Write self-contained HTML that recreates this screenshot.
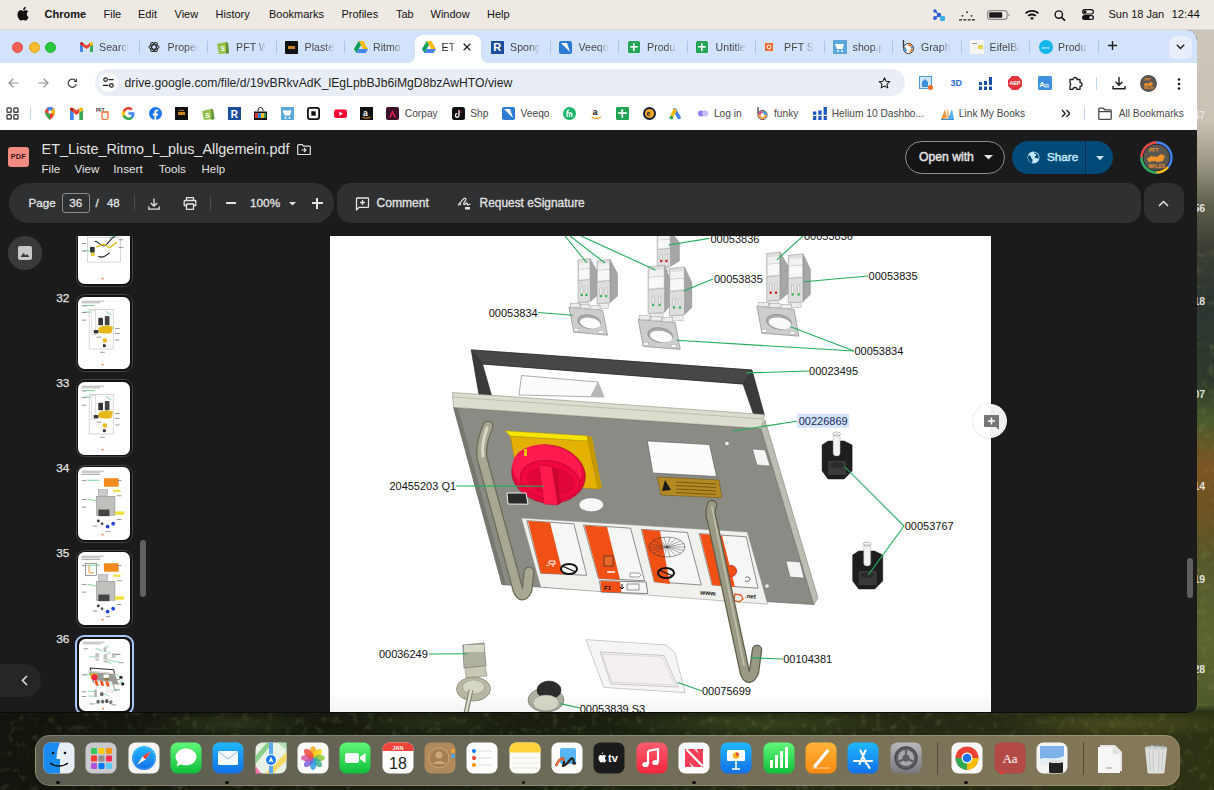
<!DOCTYPE html>
<html><head><meta charset="utf-8">
<style>
*{margin:0;padding:0;box-sizing:border-box}
html,body{width:1214px;height:790px;overflow:hidden;font-family:"Liberation Sans",sans-serif;position:relative;background:#2a3018}
.a{position:absolute}
#desk{left:0;top:0;width:1214px;height:790px;overflow:hidden}
#menubar{left:0;top:0;width:1214px;height:29.5px;background:#eeeae3;color:#111;font-size:11px}
#menubar span{position:absolute;top:9px;line-height:11px;white-space:nowrap}
#win{left:0;top:30px;width:1196.5px;height:682px;background:#1b1b1b;border-radius:0 10px 10px 0;overflow:hidden;box-shadow:0 1px 0 #0a0a0a}
#tabs{left:0;top:0;width:1197px;height:33px;background:#d3e3fd}
.ti{top:10px;height:14px;display:flex;align-items:center}
.tt{top:10px;font-size:10.6px;line-height:14px;color:#474747;white-space:nowrap;width:30px;overflow:hidden;-webkit-mask-image:linear-gradient(90deg,#000 65%,transparent 100%)}
.tsep{top:11px;width:1px;height:12px;background:#a8c4f0}
#toolbar{left:0;top:33px;width:1197px;height:67px;background:#fff}
.bt{top:45px;font-size:10.2px;line-height:12px;color:#474747;white-space:nowrap}
#drive{left:0;top:100px;width:1197px;height:583px;background:#1b1b1b}
.pill{background:#2f3031;border-radius:20px}
#page{left:330px;top:106px;width:661px;height:477px;background:#fff;overflow:hidden}
#dock{left:35px;top:734.5px;width:1145px;height:51px;background:linear-gradient(90deg,#5c5d50,#6a6857 40%,#7a7358 75%,#867857);border-radius:15px;border:1px solid rgba(210,210,190,.3)}
</style></head><body>
<div id="desk" class="a"><div class="a" style="left:0;top:0;width:1214px;height:790px;background:linear-gradient(180deg,#cdc8bb 0px,#c8c3b5 120px,#9a9682 165px,#5e5e4c 205px,#3c4034 245px,#2c3530 300px,#2e3a2c 380px,#4a5a2c 420px,#7c5624 465px,#6e5222 510px,#56582a 560px,#5a6430 640px,#4e5a2a 705px,#1c2212 714px,#1a1f10 790px)"></div>
<div class="a" style="left:0;top:712px;width:1214px;height:78px;background:linear-gradient(90deg,#11150d 0px,#161b0f 300px,#1a2010 600px,#212812 800px,#272b14 1000px,#2e3314 1214px)"></div>
<div class="a" style="left:0;top:712px;width:1214px;height:78px;background:radial-gradient(ellipse 90px 14px at 230px 12px,rgba(70,85,40,.45),transparent),radial-gradient(ellipse 150px 14px at 760px 12px,rgba(80,100,40,.45),transparent),radial-gradient(ellipse 120px 14px at 1120px 12px,rgba(110,110,40,.45),transparent),radial-gradient(ellipse 90px 14px at 430px 10px,rgba(60,75,35,.35),transparent)"></div>
<div class="a" style="left:1193.5px;top:109px;font:bold 10.5px/12px 'Liberation Sans';color:rgba(255,255,255,.55)">47</div>
<div class="a" style="left:1193.5px;top:202px;font:bold 10.5px/12px 'Liberation Sans';color:rgba(255,255,255,.85)">56</div>
<div class="a" style="left:1193.5px;top:295px;font:bold 10.5px/12px 'Liberation Sans';color:rgba(255,255,255,.85)">18</div>
<div class="a" style="left:1193.5px;top:388px;font:bold 10.5px/12px 'Liberation Sans';color:rgba(255,255,255,.85)">07</div>
<div class="a" style="left:1193.5px;top:480px;font:bold 10.5px/12px 'Liberation Sans';color:rgba(255,255,255,.85)">14</div>
<div class="a" style="left:1193.5px;top:573px;font:bold 10.5px/12px 'Liberation Sans';color:rgba(255,255,255,.85)">19</div>
<div class="a" style="left:1193.5px;top:663px;font:bold 10.5px/12px 'Liberation Sans';color:rgba(255,255,255,.85)">28</div>
<svg class="a" style="left:0;top:0" width="1214" height="790"><defs><filter id="fol" x="0" y="0" width="100%" height="100%"><feTurbulence type="fractalNoise" baseFrequency=".12" numOctaves="2" seed="7"/><feColorMatrix values="0 0 0 0 .3  0 0 0 0 .36  0 0 0 0 .12  0 0 0 1.8 -1"/></filter></defs><rect x="0" y="712" width="1214" height="78" filter="url(#fol)" opacity=".35"/><rect x="1196" y="250" width="18" height="462" filter="url(#fol)" opacity=".4"/></svg>
</div>
<div id="menubar" class="a">
  <svg class="a" style="left:17px;top:7px" width="12" height="14" viewBox="0 0 170 200"><path fill="#111" d="M150 170c-8 12-17 24-30 24s-17-8-32-8-20 8-32 8-22-13-30-25C9 144-3 100 15 70c8-15 24-24 40-24 13 0 25 9 33 9s21-10 36-9c6 0 24 2 36 19-1 1-21 13-21 38 0 30 26 40 26 40s-5 16-15 27zM117 27c7-8 11-19 10-30-10 0-22 7-29 15-6 7-12 18-10 29 11 1 22-6 29-14z"/></svg>
  <span style="left:44.5px;font-weight:bold">Chrome</span>
  <span style="left:103.5px">File</span>
  <span style="left:138px">Edit</span>
  <span style="left:174.5px">View</span>
  <span style="left:215.5px">History</span>
  <span style="left:269px">Bookmarks</span>
  <span style="left:341.5px">Profiles</span>
  <span style="left:396px">Tab</span>
  <span style="left:430.5px">Window</span>
  <span style="left:487px">Help</span>
  <!-- right icons -->
  <svg class="a" style="left:932px;top:9px" width="13" height="12" viewBox="0 0 13 12"><circle cx="3" cy="2" r="1.8" fill="#2f5fd0"/><circle cx="3" cy="9" r="2" fill="#2f5fd0"/><circle cx="7" cy="6" r="2.2" fill="#2f5fd0"/><path d="M3 2L7 6L3 9" stroke="#2f5fd0" stroke-width="1.2" fill="none"/><rect x="8" y="7" width="5" height="5" rx="1" fill="#3ab0e0"/></svg>
  <svg class="a" style="left:958.5px;top:10.5px" width="16" height="10" viewBox="0 0 16 10"><g fill="#222"><circle cx="8" cy="1.2" r=".9"/><circle cx="3.5" cy="4.8" r=".9"/><circle cx="12.5" cy="4.8" r=".9"/><rect x="0" y="8.2" width="3" height="1.3"/><rect x="4.3" y="8.2" width="3" height="1.3"/><rect x="8.7" y="8.2" width="3" height="1.3"/><rect x="13" y="8.2" width="3" height="1.3"/></g></svg>
  <svg class="a" style="left:987px;top:10px" width="23" height="10" viewBox="0 0 23 10"><rect x=".6" y=".6" width="19.5" height="8.8" rx="2.6" fill="none" stroke="#888" stroke-width="1.1"/><rect x="2.2" y="2.2" width="13" height="5.6" rx="1.2" fill="#1a1a1a"/><path d="M21.3 3.4v3.2c.8-.3 1.2-.9 1.2-1.6s-.4-1.3-1.2-1.6z" fill="#888"/></svg>
  <svg class="a" style="left:1025px;top:10px" width="14" height="10" viewBox="0 0 14 10"><path fill="#111" d="M7 0C4.3 0 1.9 1 0 2.7l1.2 1.3C2.8 2.6 4.8 1.8 7 1.8s4.2.8 5.8 2.2L14 2.7C12.1 1 9.7 0 7 0zM7 3.6c-1.7 0-3.2.6-4.4 1.7l1.2 1.3C4.7 5.8 5.8 5.4 7 5.4s2.3.4 3.2 1.2l1.2-1.3C10.2 4.2 8.7 3.6 7 3.6zM7 7.2c-.8 0-1.5.3-2 .8L7 10l2-2c-.5-.5-1.2-.8-2-.8z"/></svg>
  <svg class="a" style="left:1054px;top:9.5px" width="12" height="11" viewBox="0 0 12 11"><circle cx="4.8" cy="4.6" r="3.7" fill="none" stroke="#111" stroke-width="1.4"/><path d="M7.5 7.4l3.6 3.3" stroke="#111" stroke-width="1.6"/></svg>
  <svg class="a" style="left:1082px;top:9px" width="12" height="11" viewBox="0 0 12 11"><rect x=".6" y=".6" width="10.8" height="4.4" rx="2.2" fill="none" stroke="#111" stroke-width="1.1"/><circle cx="3" cy="2.8" r="1.6" fill="#111"/><rect x="0" y="6" width="12" height="5" rx="2.5" fill="#111"/><circle cx="9" cy="8.5" r="1.6" fill="#eee"/></svg>
  <span style="left:1108.5px;font-size:11px">Sun 18 Jan</span>
  <span style="left:1171.4px;font-size:11.4px">12:44</span>
</div>
<div class="a" style="left:0;top:29px;width:1214px;height:1px;background:#d9d5cd"></div><div id="win" class="a">
<div id="tabs" class="a"><div class="a ti" style="left:79.8px"><svg width="13" height="10" viewBox="0 0 26 20"><path d="M2 20h4V9L0 4.5V18a2 2 0 0 0 2 2z" fill="#4285f4"/><path d="M20 20h4a2 2 0 0 0 2-2V4.5L20 9z" fill="#34a853"/><path d="M20 2v7l6-4.5V3c0-2.5-2.8-3.9-4.8-2.4z" fill="#fbbc04"/><path d="M6 9V2l7 5.2L20 2v7l-7 5.2z" fill="#ea4335"/><path d="M0 3v1.5L6 9V2L4.8.6C2.8-.9 0 .5 0 3z" fill="#c5221f"/></svg></div>
<div class="a tt" style="left:99.1px">Search</div>
<div class="a tsep" style="left:138.7px"></div>
<div class="a ti" style="left:148.3px"><svg width="12" height="12" viewBox="0 0 24 24"><g fill="none" stroke="#222" stroke-width="2"><ellipse cx="12" cy="12" rx="10" ry="4.5"/><ellipse cx="12" cy="12" rx="10" ry="4.5" transform="rotate(60 12 12)"/><ellipse cx="12" cy="12" rx="10" ry="4.5" transform="rotate(120 12 12)"/></g></svg></div>
<div class="a tt" style="left:167.6px">Proper</div>
<div class="a tsep" style="left:207.2px"></div>
<div class="a ti" style="left:216.8px"><svg width="12" height="14" viewBox="0 0 24 28"><path d="M3 7l15-3 4 2 2 20-20 2L0 8z" fill="#95bf47"/><path d="M18 4l4 2 2 20-6 2z" fill="#5e8e3e"/><text x="7" y="21" font-size="13" font-weight="bold" fill="#fff" font-family="Liberation Sans">S</text></svg></div>
<div class="a tt" style="left:236.1px">PFT W</div>
<div class="a tsep" style="left:275.7px"></div>
<div class="a ti" style="left:285.3px"><div style="width:13px;height:13px;background:#111;border-radius:1px;position:relative"><div style="position:absolute;left:3px;top:5px;width:7px;height:3px;background:#c8861e"></div></div></div>
<div class="a tt" style="left:304.6px">Plaste</div>
<div class="a tsep" style="left:344.2px"></div>
<div class="a ti" style="left:353.8px"><svg width="14" height="12" viewBox="0 0 28 24"><path d="M9.3 0h9.4l9.3 16h-9.4z" fill="#ffba00"/><path d="M9.3 0L0 16l4.7 8L14 8z" fill="#0f9d58"/><path d="M4.7 24h18.6l4.7-8H9.3z" fill="#4285f4"/></svg></div>
<div class="a tt" style="left:373.1px">Ritmo</div>
<div class="a" style="left:414.5px;top:5px;width:66px;height:28px;background:#fff;border-radius:8px 8px 0 0"></div>
<div class="a" style="left:406.5px;top:25px;width:8px;height:8px;background:radial-gradient(circle at 0 0,#d3e3fd 8px,#fff 8.5px)"></div>
<div class="a" style="left:480.5px;top:25px;width:8px;height:8px;background:radial-gradient(circle at 100% 0,#d3e3fd 8px,#fff 8.5px)"></div>
<div class="a ti" style="left:422.3px"><svg width="14" height="12" viewBox="0 0 28 24"><path d="M9.3 0h9.4l9.3 16h-9.4z" fill="#ffba00"/><path d="M9.3 0L0 16l4.7 8L14 8z" fill="#0f9d58"/><path d="M4.7 24h18.6l4.7-8H9.3z" fill="#4285f4"/></svg></div>
<div class="a tt" style="left:441.6px;width:14px;color:#1f1f1f">ET</div>
<svg class="a" style="left:462.5px;top:13px" width="8" height="8" viewBox="0 0 8 8"><path d="M.7.7l6.6 6.6M7.3.7L.7 7.3" stroke="#1f1f1f" stroke-width="1.3"/></svg>
<div class="a ti" style="left:490.8px"><div style="width:13px;height:13px;background:#1d4e9e;color:#fff;font:bold 11px/13px Liberation Sans;text-align:center">R</div></div>
<div class="a tt" style="left:510.1px">Spong</div>
<div class="a tsep" style="left:549.7px"></div>
<div class="a ti" style="left:559.3px"><svg width="13" height="13" viewBox="0 0 13 13"><rect width="13" height="13" rx="2" fill="#2b7bd4"/><path d="M2 2h6l3 9z" fill="#fff"/></svg></div>
<div class="a tt" style="left:578.6px">Veeqo</div>
<div class="a tsep" style="left:618.2px"></div>
<div class="a ti" style="left:627.8px"><svg width="12" height="12" viewBox="0 0 12 12"><rect width="12" height="12" rx="1.5" fill="#23a455"/><rect x="2.2" y="5" width="7.6" height="1.6" fill="#fff"/><rect x="5" y="2.2" width="1.6" height="8" fill="#fff"/></svg></div>
<div class="a tt" style="left:647.1px">Produ</div>
<div class="a tsep" style="left:686.7px"></div>
<div class="a ti" style="left:696.3px"><svg width="12" height="12" viewBox="0 0 12 12"><rect width="12" height="12" rx="1.5" fill="#23a455"/><rect x="2.2" y="5" width="7.6" height="1.6" fill="#fff"/><rect x="5" y="2.2" width="1.6" height="8" fill="#fff"/></svg></div>
<div class="a tt" style="left:715.6px">Untitle</div>
<div class="a tsep" style="left:755.2px"></div>
<div class="a ti" style="left:764.8px"><svg width="8" height="8" viewBox="0 0 8 8"><rect width="8" height="8" fill="#f26a2b"/><circle cx="4" cy="4" r="2" fill="none" stroke="#fff" stroke-width="1"/></svg></div>
<div class="a tt" style="left:784.1px">PFT St</div>
<div class="a tsep" style="left:823.7px"></div>
<div class="a ti" style="left:833.3px"><svg width="14" height="14" viewBox="0 0 14 14"><rect width="14" height="14" fill="#5aa7dc"/><path d="M2 4h9l-1.5 5H4z" fill="#fff"/><circle cx="5" cy="11" r="1" fill="#fff"/><circle cx="9" cy="11" r="1" fill="#fff"/></svg></div>
<div class="a tt" style="left:852.6px">shop.p</div>
<div class="a tsep" style="left:892.2px"></div>
<div class="a ti" style="left:901.8px"><svg width="12" height="14" viewBox="0 0 12 14"><path d="M1.5 0v8" stroke="#333" stroke-width="1.3"/><circle cx="6.5" cy="8.5" r="5" fill="#fff" stroke="#333" stroke-width="1"/><circle cx="6.5" cy="8.5" r="3.6" fill="none" stroke="#e84" stroke-width="2.2" stroke-dasharray="4 4"/><circle cx="6.5" cy="8.5" r="3.6" fill="none" stroke="#49c" stroke-width="2.2" stroke-dasharray="4 8" stroke-dashoffset="4"/></svg></div>
<div class="a tt" style="left:921.1px">Graphi</div>
<div class="a tsep" style="left:960.7px"></div>
<div class="a ti" style="left:970.3px"><div style="width:14px;height:14px;background:#f4f4f0;position:relative"><div style="position:absolute;left:8px;top:5px;width:5px;height:4px;background:#e7d64a"></div><div style="position:absolute;left:2px;top:3px;width:5px;height:1px;background:#999"></div></div></div>
<div class="a tt" style="left:989.6px">EifelBa</div>
<div class="a tsep" style="left:1029.2px"></div>
<div class="a ti" style="left:1038.8px"><svg width="14" height="14" viewBox="0 0 14 14"><circle cx="7" cy="7" r="7" fill="#13b5ea"/><text x="2.5" y="8.6" font-size="4" fill="#fff" font-family="Liberation Sans">xero</text></svg></div>
<div class="a tt" style="left:1058.1px">Produ</div>
<div class="a tsep" style="left:1097.7px"></div><div class="a" style="left:12px;top:12px;width:11px;height:11px;border-radius:50%;background:#ff5f57;border:.5px solid #e2463f"></div><div class="a" style="left:28.5px;top:12px;width:11px;height:11px;border-radius:50%;background:#febc2e;border:.5px solid #e1a116"></div><div class="a" style="left:45px;top:12px;width:11px;height:11px;border-radius:50%;background:#28c840;border:.5px solid #1aab29"></div><div class="a" style="left:1108px;top:11px;font-size:0"><svg width="9" height="9" viewBox="0 0 9 9"><path d="M4.5 0v9M0 4.5h9" stroke="#1f1f1f" stroke-width="1.4"/></svg></div><div class="a" style="left:1168.5px;top:5.5px;width:23px;height:23px;border-radius:7px;background:#e8effb"></div><svg class="a" style="left:1175.5px;top:14px" width="9" height="6" viewBox="0 0 9 6"><path d="M.8.8L4.5 4.5 8.2.8" fill="none" stroke="#1f1f1f" stroke-width="1.4"/></svg></div>
<div id="toolbar" class="a">
  <svg class="a" style="left:8px;top:15px" width="11" height="10" viewBox="0 0 11 10"><path d="M10.5 5H1.2M5.3 .8L1 5l4.3 4.2" fill="none" stroke="#8e9297" stroke-width="1.2"/></svg>
  <svg class="a" style="left:37.5px;top:15px" width="11" height="10" viewBox="0 0 11 10"><path d="M.5 5h9.3M5.7 .8L10 5 5.7 9.2" fill="none" stroke="#8e9297" stroke-width="1.2"/></svg>
  <svg class="a" style="left:67px;top:14.5px" width="11" height="11" viewBox="0 0 11 11"><path d="M9.3 6.2A4.1 4.1 0 1 1 8.2 2.3" fill="none" stroke="#474747" stroke-width="1.3"/><path d="M10 .3v3.6H6.4z" fill="#474747"/></svg>
  <div class="a" style="left:94.5px;top:6px;width:810px;height:27px;border-radius:14px;background:#e9eef6"></div>
  <div class="a" style="left:99px;top:10px;width:19px;height:19px;border-radius:50%;background:#fff"></div>
  <svg class="a" style="left:103px;top:14px" width="11" height="11" viewBox="0 0 11 11"><g fill="none" stroke="#1f1f1f" stroke-width="1.2"><circle cx="2.6" cy="2.6" r="1.8"/><path d="M5.5 2.6h5"/><circle cx="8.4" cy="8.4" r="1.8"/><path d="M0 8.4h5.5"/></g></svg>
  <div class="a" style="left:124.6px;top:12.5px;font-size:12.2px;line-height:14px;color:#1f1f1f;white-space:nowrap">drive.google.com/file/d/19vBRkvAdK_lEgLpbBJb6iMgD8bzAwHTO/view</div>
  <svg class="a" style="left:878px;top:14px" width="13" height="12" viewBox="0 0 24 23"><path d="M12 1.5l3 6.6 7.2.8-5.4 4.9 1.5 7.1L12 17.3l-6.3 3.6 1.5-7.1L1.8 8.9 9 8.1z" fill="none" stroke="#1f1f1f" stroke-width="2" stroke-linejoin="round"/></svg>
  <!-- extensions -->
  <svg class="a" style="left:919px;top:13px" width="14" height="14" viewBox="0 0 14 14"><rect x=".5" y=".5" width="12" height="12" fill="#cfe6fb" stroke="#4a9be0"/><path d="M3 11V6l3-3 3 3v5" fill="#3c8fd8"/><circle cx="11.5" cy="11.5" r="2.5" fill="#f36d21"/></svg>
  <div class="a" style="left:950.5px;top:14px;font:bold 9px/12px 'Liberation Sans';color:#2a6ad8">3D</div>
  <svg class="a" style="left:978.5px;top:14px" width="14" height="13" viewBox="0 0 14 13"><g fill="#1a4fa8"><rect x="0" y="5" width="3" height="3"/><rect x="0" y="9.5" width="3" height="3.5"/><rect x="5" y="4" width="3" height="4"/><rect x="5" y="9.5" width="3" height="3.5"/><rect x="10" y="0" width="3" height="8"/><rect x="10" y="9.5" width="3" height="3.5"/></g></svg>
  <svg class="a" style="left:1008px;top:13px" width="14" height="14" viewBox="0 0 14 14"><path d="M4.1 0h5.8L14 4.1v5.8L9.9 14H4.1L0 9.9V4.1z" fill="#e3343c"/><text x="1.5" y="9" font-size="5.2" font-weight="bold" fill="#fff" font-family="Liberation Sans">ABP</text></svg>
  <svg class="a" style="left:1038px;top:13px" width="14" height="14" viewBox="0 0 14 14"><rect width="14" height="14" rx="1.5" fill="#3d8fe0"/><text x="1.3" y="10.5" font-size="8" font-weight="bold" fill="#fff" font-family="Liberation Sans">A</text><text x="7" y="12" font-size="5.5" font-weight="bold" fill="#e8f2ff" font-family="Liberation Sans">R</text></svg>
  <svg class="a" style="left:1068px;top:13px" width="15" height="14" viewBox="0 0 15 14"><path d="M2 3.5h3a2 2 0 0 1 4 0h3v3a2 2 0 0 1 0 4v3h-3a2 2 0 0 0-4 0H2v-3.5a2 2 0 0 0 0-3z" fill="none" stroke="#1f1f1f" stroke-width="1.3" stroke-linejoin="round"/></svg>
  <div class="a" style="left:1096px;top:14px;width:1px;height:13px;background:#c2d6f2"></div>
  <svg class="a" style="left:1112px;top:13px" width="14" height="14" viewBox="0 0 14 14"><path d="M7 1v8M3.5 5.8L7 9.3l3.5-3.5M1 10v2.8h12V10" fill="none" stroke="#1f1f1f" stroke-width="1.4"/></svg>
  <svg class="a" style="left:1140px;top:11.5px" width="17" height="17" viewBox="0 0 17 17"><circle cx="8.5" cy="8.5" r="8.5" fill="#5a5650"/><text x="4.5" y="6" font-size="3.2" font-weight="bold" fill="#f0932b" font-family="Liberation Sans">PFT</text><path d="M3.5 9.5l2-1.5 3 .5 2.2-1.5 2.3 1-1 2.5-2.5.5-2-.5-2.5.5z" fill="#f0932b"/><text x="3.8" y="14" font-size="2.8" font-weight="bold" fill="#f0932b" font-family="Liberation Sans">WALES</text></svg>
  <svg class="a" style="left:1176.5px;top:14.5px" width="4" height="12" viewBox="0 0 4 12"><g fill="#1f1f1f"><circle cx="2" cy="1.5" r="1.3"/><circle cx="2" cy="6" r="1.3"/><circle cx="2" cy="10.5" r="1.3"/></g></svg>
<svg class="a" style="left:5.5px;top:44px" width="13" height="13" viewBox="0 0 13 13"><g fill="none" stroke="#474747" stroke-width="1.4"><rect x="1" y="1" width="4.2" height="4.2" rx=".8"/><rect x="7.8" y="1" width="4.2" height="4.2" rx=".8"/><rect x="1" y="7.8" width="4.2" height="4.2" rx=".8"/><rect x="7.8" y="7.8" width="4.2" height="4.2" rx=".8"/></g></svg>
<div class="a" style="left:30px;top:44px;width:1px;height:12.5px;background:#c2d6f2"></div>
<svg class="a" style="left:44.5px;top:44px" width="10" height="13" viewBox="0 0 10 13"><path d="M5 0C2.2 0 0 2.2 0 5c0 3.5 5 8 5 8s5-4.5 5-8c0-2.8-2.2-5-5-5z" fill="#ea4335"/><path d="M0 5c0 3.5 5 8 5 8V7.5z" fill="#34a853"/><path d="M1.5 1.5L5 5 8.5 1.5A5 5 0 0 0 1.5 1.5z" fill="#4285f4"/><path d="M10 5c0 1-.3 2-1 3L5 5l3.5-3.5c1 .9 1.5 2.2 1.5 3.5z" fill="#fbbc04"/><circle cx="5" cy="5" r="1.7" fill="#fff"/></svg>
<svg class="a" style="left:70px;top:44px" width="13" height="13" viewBox="0 0 13 13"><path d="M1 13h2.7V5.8L0 3v9a1 1 0 0 0 1 1z" fill="#4285f4"/><path d="M9.3 13H12a1 1 0 0 0 1-1V3L9.3 5.8z" fill="#34a853"/><path d="M3.7 5.8V1.3L6.5 3.4l2.8-2.1v4.5L6.5 7.9z" fill="#ea4335"/><path d="M9.3 1.3v4.5L13 3V2c0-1.2-1.4-1.9-2.4-1.2z" fill="#fbbc04"/><path d="M0 2v1l3.7 2.8V1.3L2.4.8C1.4.1 0 .8 0 2z" fill="#c5221f"/></svg>
<svg class="a" style="left:96px;top:44px" width="13" height="13" viewBox="0 0 13 13"><text x="0" y="5" font-size="4.5" font-weight="bold" fill="#222" font-family="Liberation Sans">PFT</text><path d="M6 5h6v5c0 2-2 3-3 3s-3-1-3-3z" fill="none" stroke="#f26a2b" stroke-width="1.3"/></svg>
<svg class="a" style="left:122px;top:44px" width="13" height="13" viewBox="0 0 13 13"><path d="M12.5 6.6c0-.5 0-.9-.1-1.3H6.5v2.5h3.4c-.2.8-.6 1.5-1.3 1.9v1.6h2.1c1.2-1.1 1.8-2.7 1.8-4.7z" fill="#4285f4"/><path d="M6.5 13c1.7 0 3.2-.6 4.2-1.6L8.6 9.8c-.6.4-1.3.6-2.1.6-1.6 0-3-1.1-3.5-2.6H.8v1.7C1.9 11.5 4 13 6.5 13z" fill="#34a853"/><path d="M3 7.8c-.1-.4-.2-.9-.2-1.3s.1-.9.2-1.3V3.5H.8C.3 4.4 0 5.4 0 6.5s.3 2.1.8 3z" fill="#fbbc04"/><path d="M6.5 2.6c.9 0 1.7.3 2.4.9l1.8-1.8C9.7.7 8.2 0 6.5 0 4 0 1.9 1.5.8 3.5L3 5.2c.5-1.5 1.9-2.6 3.5-2.6z" fill="#ea4335"/></svg>
<svg class="a" style="left:148.7px;top:44px" width="13" height="13" viewBox="0 0 13 13"><circle cx="6.5" cy="6.5" r="6.5" fill="#1877f2"/><path d="M7.3 13V8.4h1.6l.3-1.9H7.3V5.3c0-.5.3-1 1.1-1h.9V2.7S8.5 2.5 7.8 2.5C6.3 2.5 5.4 3.4 5.4 5v1.5H3.8v1.9h1.6V13z" fill="#fff"/></svg>
<svg class="a" style="left:175px;top:44px" width="13" height="13" viewBox="0 0 13 13"><rect width="13" height="13" fill="#111"/><rect x="3" y="5" width="7" height="3" fill="#c8861e"/><rect x="4" y="3" width="5" height="1" fill="#a06a1a"/></svg>
<svg class="a" style="left:201.5px;top:44px" width="13" height="13" viewBox="0 0 13 13"><path d="M2 3.5l7.5-1.8L11 2.5l1.5 9.5L2 13 0 4.2z" fill="#95bf47"/><path d="M9.5 1.7L11 2.5l1.5 9.5-3 1z" fill="#5e8e3e"/><text x="3.2" y="10.5" font-size="7" font-weight="bold" fill="#fff" font-family="Liberation Sans">S</text></svg>
<svg class="a" style="left:228px;top:44px" width="13" height="13" viewBox="0 0 13 13"><rect width="13" height="13" fill="#1d4e9e"/><text x="2.8" y="10.8" font-size="10" font-weight="bold" fill="#fff" font-family="Liberation Sans">R</text></svg>
<svg class="a" style="left:254px;top:44px" width="13" height="13" viewBox="0 0 13 13"><path d="M4 4V3a2.5 2.5 0 0 1 5 0v1" fill="none" stroke="#222" stroke-width="1"/><rect x="0" y="4.5" width="13" height="8.5" fill="#111"/><rect x="1" y="6" width="3" height="5" fill="#e53935"/><rect x="4" y="6" width="3" height="5" fill="#1e88e5"/><rect x="7" y="6" width="3" height="5" fill="#fbc02d"/><rect x="10" y="6" width="2" height="5" fill="#43a047"/></svg>
<svg class="a" style="left:281px;top:44px" width="13" height="13" viewBox="0 0 13 13"><rect width="13" height="13" fill="#5aa7dc"/><path d="M1.5 3.5h9L9 8.5H3.5z" fill="#fff"/><circle cx="4.5" cy="10.8" r="1" fill="#fff"/><circle cx="8.5" cy="10.8" r="1" fill="#fff"/></svg>
<svg class="a" style="left:307.3px;top:44px" width="13" height="13" viewBox="0 0 13 13"><rect x=".9" y=".9" width="11.2" height="11.2" rx="2" fill="none" stroke="#111" stroke-width="1.8"/><rect x="4.3" y="4.3" width="4.4" height="4.4" fill="#111"/></svg>
<svg class="a" style="left:333.7px;top:44px" width="13" height="13" viewBox="0 0 13 13"><rect x="0" y="2.5" width="13" height="8.5" rx="2.3" fill="#ff0033"/><path d="M5.3 4.6v4.3l3.6-2.15z" fill="#fff"/></svg>
<svg class="a" style="left:360px;top:44px" width="13" height="13" viewBox="0 0 13 13"><rect width="13" height="13" fill="#111"/><text x="3" y="8.5" font-size="8.5" font-weight="bold" fill="#fff" font-family="Liberation Sans">a</text><path d="M2.5 10c2.5 1.5 6 1.5 8 0" fill="none" stroke="#f90" stroke-width="1"/></svg>
<svg class="a" style="left:386.4px;top:44px" width="13" height="13" viewBox="0 0 13 13"><rect width="13" height="13" rx="2" fill="#3b1028"/><path d="M3 10.5L6.5 3l3.5 7.5H8.3L6.5 6.5 4.7 10.5z" fill="#e3224b"/></svg>
<div class="a bt" style="left:404.8px">Corpay</div>
<svg class="a" style="left:451.8px;top:44px" width="13" height="13" viewBox="0 0 13 13"><rect width="13" height="13" rx="2.5" fill="#111"/><path d="M7 3v5.5a1.8 1.8 0 1 1-1.8-1.8" fill="none" stroke="#fff" stroke-width="1.3"/><path d="M7 3.2c.3 1.2 1.2 2 2.5 2" fill="none" stroke="#ff2d55" stroke-width="1"/></svg>
<div class="a bt" style="left:470.2px">Shp</div>
<svg class="a" style="left:501.8px;top:44px" width="13" height="13" viewBox="0 0 13 13"><rect width="13" height="13" rx="2" fill="#2b7bd4"/><path d="M2 2h6l3 9z" fill="#fff"/></svg>
<div class="a bt" style="left:520.6px">Veeqo</div>
<svg class="a" style="left:563px;top:44px" width="13" height="13" viewBox="0 0 13 13"><circle cx="6.5" cy="6.5" r="6.5" fill="#1bb56b"/><path d="M4.2 10V5.2c0-1.2.8-2 2-2M3.3 5.5h2.8M6.5 10V7a1.2 1.2 0 0 1 2.4 0v3" fill="none" stroke="#fff" stroke-width="1.3"/></svg>
<svg class="a" style="left:589.5px;top:44px" width="13" height="13" viewBox="0 0 13 13"><text x="2.5" y="8" font-size="9" font-weight="bold" fill="#111" font-family="Liberation Sans">a</text><path d="M1.5 10c2.8 1.7 6.5 1.7 9.5 0" fill="none" stroke="#f90" stroke-width="1.2"/></svg>
<svg class="a" style="left:616px;top:44px" width="13" height="13" viewBox="0 0 13 13"><rect width="13" height="13" rx="1.2" fill="#23a455"/><rect x="2.2" y="5.2" width="8.6" height="1.7" fill="#fff"/><rect x="5.4" y="2.2" width="1.7" height="8.6" fill="#fff"/></svg>
<svg class="a" style="left:642.5px;top:44px" width="13" height="13" viewBox="0 0 13 13"><circle cx="6.5" cy="6.5" r="6.5" fill="#101a3a"/><circle cx="6.5" cy="6.5" r="4.6" fill="#f5a623"/><text x="3.6" y="9" font-size="7" font-weight="bold" fill="#101a3a" font-family="Liberation Sans">e</text></svg>
<svg class="a" style="left:668.9px;top:44px" width="13" height="13" viewBox="0 0 13 13"><path d="M4.8 1.3a1.8 1.8 0 0 1 2.4.6l4.5 7.8a1.8 1.8 0 0 1-3.1 1.8L4.1 3.7a1.8 1.8 0 0 1 .7-2.4z" fill="#4285f4"/><path d="M4.9 1.6L1.3 8.2l3 1.8L8 3.5z" fill="#fbbc04"/><circle cx="2.4" cy="10.6" r="1.9" fill="#34a853"/></svg>
<svg class="a" style="left:696.5px;top:44px" width="12" height="13" viewBox="0 0 12 13"><circle cx="4" cy="6.5" r="3" fill="#8c7cf0"/><circle cx="8.3" cy="6.5" r="3" fill="#c9c0fb"/></svg>
<div class="a bt" style="left:713.9px">Log in</div>
<svg class="a" style="left:755.5px;top:44px" width="12" height="13" viewBox="0 0 12 13"><path d="M2 0v7" stroke="#333" stroke-width="1.2"/><circle cx="6.5" cy="8" r="4.6" fill="#fff" stroke="#333" stroke-width=".9"/><circle cx="6.5" cy="8" r="3" fill="none" stroke="#f2a03d" stroke-width="2"/><path d="M6.5 5a3 3 0 0 1 3 3" fill="none" stroke="#3aa7e0" stroke-width="2"/><path d="M3.5 8a3 3 0 0 1 3-3" fill="none" stroke="#e24d9b" stroke-width="2"/></svg>
<div class="a bt" style="left:774px">funky</div>
<svg class="a" style="left:812.8px;top:44px" width="14" height="13" viewBox="0 0 14 13"><g fill="#1a55c4"><rect x="0" y="4.5" width="3.3" height="3.3"/><rect x="0" y="9" width="3.3" height="4"/><rect x="5.3" y="3.5" width="3.3" height="4.3"/><rect x="5.3" y="9" width="3.3" height="4"/><rect x="10.6" y="0" width="3.3" height="7.8"/><rect x="10.6" y="9" width="3.3" height="4"/></g></svg>
<div class="a bt" style="left:831.7px">Helium 10 Dashbo...</div>
<svg class="a" style="left:940.8px;top:44px" width="13" height="13" viewBox="0 0 13 13"><path d="M0 12L4 2l2 10z" fill="#f2994a"/><path d="M4 12l3-11 2 11z" fill="#f6c28b"/><path d="M7 12l4-10 2 10z" fill="#56b4e9"/><path d="M0 12.5h13" stroke="#3a8fd8" stroke-width="1"/></svg>
<div class="a bt" style="left:958.8px">Link My Books</div>
<svg class="a" style="left:1061px;top:44px" width="9" height="13" viewBox="0 0 9 13"><path d="M1 3l3.2 3.5L1 10M5.5 3l3.2 3.5L5.5 10" fill="none" stroke="#1f1f1f" stroke-width="1.3"/></svg>
<div class="a" style="left:1084px;top:44px;width:1px;height:12.5px;background:#c2d6f2"></div>
<svg class="a" style="left:1098.4px;top:44px" width="14" height="13" viewBox="0 0 14 13"><path d="M.8 2.2c0-.6.4-1 1-1h3.6l1.4 1.6h5.4c.6 0 1 .4 1 1v7.6c0 .6-.4 1-1 1H1.8c-.6 0-1-.4-1-1z" fill="none" stroke="#474747" stroke-width="1.3"/><path d="M.8 4.6h12" stroke="#474747" stroke-width="1.1"/></svg>
<div class="a bt" style="left:1118.7px">All Bookmarks</div>
</div>
<div id="drive" class="a"><div class="a" style="left:8px;top:17px;width:20.5px;height:20px;border-radius:3px;background:#f28b82;color:#3c1410;font:bold 7.2px/20px Liberation Sans;text-align:center;letter-spacing:.2px">PDF</div>
<div class="a" style="left:41.6px;top:11px;font-size:14.4px;line-height:16px;color:#e3e3e3;white-space:nowrap">ET_Liste_Ritmo_L_plus_Allgemein.pdf</div>
<svg class="a" style="left:297px;top:14px" width="14" height="11" viewBox="0 0 14 11"><path d="M.7 1.5c0-.5.3-.8.8-.8h3.8l1.2 1.4h6c.5 0 .8.3.8.8v7c0 .5-.3.8-.8.8H1.5c-.5 0-.8-.3-.8-.8z" fill="none" stroke="#e3e3e3" stroke-width="1.2"/><path d="M4.5 6h4.5M7 4l2 2-2 2" fill="none" stroke="#e3e3e3" stroke-width="1.1"/></svg>
<div class="a" style="left:41.6px;top:32.5px;font-size:11.5px;line-height:12px;color:#e3e3e3;white-space:nowrap">File</div>
<div class="a" style="left:74.6px;top:32.5px;font-size:11.5px;line-height:12px;color:#e3e3e3;white-space:nowrap">View</div>
<div class="a" style="left:113.3px;top:32.5px;font-size:11.8px;line-height:12px;color:#e3e3e3;white-space:nowrap">Insert</div>
<div class="a" style="left:158.7px;top:32.5px;font-size:11.6px;line-height:12px;color:#e3e3e3;white-space:nowrap">Tools</div>
<div class="a" style="left:201.6px;top:32.5px;font-size:11.4px;line-height:12px;color:#e3e3e3;white-space:nowrap">Help</div>
<div class="a" style="left:904.5px;top:10.5px;width:100.5px;height:33px;border:1px solid #8f8f8f;border-radius:17px;background:#141414"></div>
<div class="a" style="left:919px;top:20px;font-size:12.2px;line-height:14px;color:#e3e3e3;-webkit-text-stroke:.45px #e3e3e3;white-space:nowrap">Open with</div>
<svg class="a" style="left:983.5px;top:25.19999999999999px" width="9" height="5" viewBox="0 0 9 5"><path d="M0 0h9L4.5 4.5z" fill="#e3e3e3"/></svg>
<div class="a" style="left:1011.8px;top:10.5px;width:101.5px;height:33px;border-radius:17px;background:#004a77"></div>
<div class="a" style="left:1085px;top:10.5px;width:1px;height:33px;background:#06304f"></div>
<svg class="a" style="left:1026.5px;top:21px" width="13" height="13" viewBox="0 0 24 24"><circle cx="12" cy="12" r="11" fill="#c2e7ff"/><path d="M3 8c2 0 3 1 4 2s0 3 2 4 1 3 1 5-1 3-1 3A10 10 0 0 1 3 8zM13 2.2c1 1 0 2 1 3s3 0 3 2-3 2-3 4 2 2 4 2 3 1 3 2A10 10 0 0 0 13 2.2z" fill="#004a77"/></svg>
<div class="a" style="left:1047px;top:20px;font-size:11.7px;line-height:14px;color:#c2e7ff;-webkit-text-stroke:.45px #c2e7ff;white-space:nowrap">Share</div>
<svg class="a" style="left:1095.5px;top:25.5px" width="8" height="5" viewBox="0 0 8 5"><path d="M0 0h8L4 4.2z" fill="#c2e7ff"/></svg>
<svg class="a" style="left:1140px;top:10.5px" width="33" height="33" viewBox="0 0 33 33"><circle cx="16.5" cy="16.5" r="15" fill="none" stroke="#4285f4" stroke-width="2.4"/><path d="M16.5 1.5A15 15 0 0 0 1.5 16.5" fill="none" stroke="#ea4335" stroke-width="2.4"/><path d="M1.5 16.5A15 15 0 0 0 16.5 31.5" fill="none" stroke="#34a853" stroke-width="2.4"/><path d="M16.5 31.5A15 15 0 0 0 28 26" fill="none" stroke="#fbbc04" stroke-width="2.4"/><circle cx="16.5" cy="16.5" r="13" fill="#5a5650"/><text x="9" y="11" font-size="5" font-weight="bold" fill="#f0932b" font-family="Liberation Sans">PFT</text><path d="M7 18l4-3 6 1 4-3 4 2-2 5-5 1-4-1-5 1z" fill="#f0932b"/><text x="8.5" y="27" font-size="4.6" font-weight="bold" fill="#f0932b" font-family="Liberation Sans">WALES</text></svg>
<div class="a" style="left:8.5px;top:53.3px;width:325px;height:40px;border-radius:20px;background:#2f3031"></div>
<div class="a" style="left:337px;top:53.3px;width:803.5px;height:40px;border-radius:14px;background:#2f3031"></div>
<div class="a" style="left:1143.5px;top:53.3px;width:40px;height:40px;border-radius:13px;background:#2f3031"></div>
<svg class="a" style="left:1158px;top:69.5px" width="11" height="7" viewBox="0 0 11 7"><path d="M1 6l4.5-4.5L10 6" fill="none" stroke="#e3e3e3" stroke-width="1.5"/></svg>
<div class="a" style="left:28.5px;top:66px;color:#e3e3e3;white-space:nowrap;font-size:11.6px;line-height:14px;-webkit-text-stroke:.3px #e3e3e3">Page</div>
<div class="a" style="left:62px;top:63px;width:27.5px;height:20px;border:1px solid #8a8a8a;border-radius:3px"></div>
<div class="a" style="left:62px;top:66px;color:#e3e3e3;white-space:nowrap;font-size:11.6px;line-height:14px;-webkit-text-stroke:.3px #e3e3e3;width:27.5px;text-align:center">36</div>
<div class="a" style="left:95.5px;top:66px;color:#e3e3e3;white-space:nowrap;font-size:11.6px;line-height:14px;-webkit-text-stroke:.3px #e3e3e3">/</div>
<div class="a" style="left:107px;top:66px;color:#e3e3e3;white-space:nowrap;font-size:11.6px;line-height:14px;-webkit-text-stroke:.3px #e3e3e3;font-size:11.4px">48</div>
<div class="a" style="left:133.5px;top:65px;width:1px;height:16px;background:#4d4d4d"></div>
<svg class="a" style="left:148px;top:67.5px" width="12" height="12" viewBox="0 0 12 12"><path d="M6 .5v7.5M2.8 5L6 8.2 9.2 5M.8 8.5v2.7h10.4V8.5" fill="none" stroke="#e3e3e3" stroke-width="1.3"/></svg>
<svg class="a" style="left:183px;top:67px" width="14" height="13" viewBox="0 0 14 13"><path d="M3.5 3.5V.7h7v2.8M3.5 8.5H1.2V4.2c0-.4.3-.7.7-.7h10.2c.4 0 .7.3.7.7v4.3h-2.3M3.5 7h7v5.3h-7z" fill="none" stroke="#e3e3e3" stroke-width="1.3" stroke-linejoin="round"/></svg>
<div class="a" style="left:210px;top:65px;width:1px;height:16px;background:#4d4d4d"></div>
<div class="a" style="left:225.5px;top:72.3px;width:10.5px;height:1.4px;background:#e3e3e3"></div>
<div class="a" style="left:250px;top:66px;color:#e3e3e3;white-space:nowrap;font-size:11.6px;line-height:14px;-webkit-text-stroke:.3px #e3e3e3;font-size:11.8px">100%</div>
<svg class="a" style="left:289px;top:71.5px" width="7" height="4" viewBox="0 0 7 4"><path d="M0 0h7L3.5 3.5z" fill="#e3e3e3"/></svg>
<div class="a" style="left:311.5px;top:72.3px;width:11px;height:1.4px;background:#e3e3e3"></div>
<div class="a" style="left:316.3px;top:67.5px;width:1.4px;height:11px;background:#e3e3e3"></div>
<svg class="a" style="left:354.5px;top:66.5px" width="15" height="14" viewBox="0 0 15 14"><path d="M1.5 13V1.7c0-.4.3-.7.7-.7h10.6c.4 0 .7.3.7.7v8c0 .4-.3.7-.7.7H4z" fill="none" stroke="#e3e3e3" stroke-width="1.3" stroke-linejoin="round"/><path d="M7.5 3v5M5 5.5h5" stroke="#e3e3e3" stroke-width="1.3"/></svg>
<div class="a" style="left:376.5px;top:66px;color:#e3e3e3;white-space:nowrap;font-size:11.6px;line-height:14px;-webkit-text-stroke:.3px #e3e3e3;font-size:12.1px">Comment</div>
<svg class="a" style="left:456.5px;top:67px" width="15" height="13" viewBox="0 0 15 13"><path d="M1 8.5C3 6 5 3 7 1.5c1.5-1 2.5.5 1.5 2C7.5 5 6 7 7 7.5s2-2 3-1.5-.5 2 .5 2 2-1 3-1" fill="none" stroke="#e3e3e3" stroke-width="1.2"/><path d="M8 10h5v2.5H8z" fill="#e3e3e3"/><path d="M2 6l2 2" stroke="#e3e3e3" stroke-width="1.2"/></svg>
<div class="a" style="left:479.6px;top:66px;color:#e3e3e3;white-space:nowrap;font-size:11.6px;line-height:14px;-webkit-text-stroke:.3px #e3e3e3;font-size:11.9px">Request eSignature</div>
<div class="a" style="left:8.2px;top:106.3px;width:33.5px;height:33.5px;border-radius:50%;background:#3a3a3a"></div>
<svg class="a" style="left:17.5px;top:116px" width="14" height="14" viewBox="0 0 14 14"><rect width="14" height="14" rx="2" fill="#c8c8c8"/><path d="M2.5 11l3-4 2 2.5L9 8l2.5 3z" fill="#3a3a3a"/></svg>
<div class="a" style="left:0;top:106px;width:150px;height:477px;overflow:hidden">
<div class="a" style="left:76px;top:-27.0px;width:57px;height:78px;border:1.2px solid #424242;border-radius:8.5px;background:#131313;padding:1.4px;font-size:0"><div style="width:51.8px;height:72.8px;border-radius:6.5px;background:#fff;overflow:hidden"><svg width="51.8" height="72.8" viewBox="0 0 56 77" preserveAspectRatio="none"><g transform="translate(0,20)"><rect x="10" y="8" width="36" height="26" fill="none" stroke="#aaa" stroke-width=".5"/><path d="M18 12c4 0 6 5 10 5s6-8 12-10" fill="none" stroke="#222" stroke-width="1.2"/><path d="M20 18l8-3 6 4 8-6" fill="none" stroke="#e8c42a" stroke-width="1.6"/><rect x="13" y="18" width="5" height="6" fill="#333"/><circle cx="16" cy="26" r="2" fill="#e8c42a"/><path d="M22 28c4 2 8 0 12-4" fill="none" stroke="#222" stroke-width="1.2"/><line x1="6" y1="22" x2="14" y2="22" stroke="#3cbf72" stroke-width=".7"/><line x1="34" y1="8" x2="44" y2="6" stroke="#3cbf72" stroke-width=".7"/><rect x="4" y="22" width="5" height=".9" fill="#888"/><rect x="44" y="10" width="5" height=".9" fill="#888"/><rect x="44" y="18" width="5" height=".9" fill="#888"/><rect x="4" y="14" width="5" height=".9" fill="#888"/></g><rect x="25.5" y="71" width="2" height="1.3" fill="#e8602a"/></svg></div></div>
<div class="a" style="left:49.3px;top:55.7px;width:20px;text-align:right;font-size:11.8px;line-height:13px;color:#e3e3e3;-webkit-text-stroke:.25px #e3e3e3">32</div>
<div class="a" style="left:76px;top:58.2px;width:57px;height:78px;border:1.2px solid #424242;border-radius:8.5px;background:#131313;padding:1.4px;font-size:0"><div style="width:51.8px;height:72.8px;border-radius:6.5px;background:#fff;overflow:hidden"><svg width="51.8" height="72.8" viewBox="0 0 56 77" preserveAspectRatio="none"><rect x="4" y="4.0" width="24" height=".8" fill="#999"/><rect x="4" y="5.8" width="20" height=".8" fill="#999"/><rect x="12" y="13" width="26" height="42" fill="none" stroke="#aaa" stroke-width=".5"/><rect x="15" y="14" width="4" height="26" fill="none" stroke="#bbb" stroke-width=".5"/><rect x="22" y="22" width="5" height="8" rx="1" fill="#333"/><rect x="29" y="20" width="5" height="10" rx="1" fill="#444"/><path d="M22 33c3-3 12-4 16-1l-2 6c-4 1-11 1-14-1z" fill="#e7b81c"/><rect x="17" y="35" width="5" height="3.5" fill="#333"/><circle cx="29" cy="46" r="2.5" fill="#e7b81c"/><rect x="27" y="50" width="3" height="3" fill="#333"/><line x1="6" y1="9" x2="18" y2="9" stroke="#3cbf72" stroke-width=".7"/><line x1="6" y1="16" x2="14" y2="16" stroke="#3cbf72" stroke-width=".7"/><line x1="30" y1="15" x2="36" y2="19" stroke="#3cbf72" stroke-width=".7"/><rect x="4" y="9" width="5" height=".9" fill="#888"/><rect x="4" y="16" width="5" height=".9" fill="#888"/><rect x="4" y="24" width="5" height=".9" fill="#888"/><rect x="40" y="33" width="5" height=".9" fill="#888"/><rect x="40" y="45" width="5" height=".9" fill="#888"/><rect x="40" y="38" width="5" height=".9" fill="#888"/><rect x="20" y="42" width="5" height=".9" fill="#888"/><rect x="24" y="58" width="5" height=".9" fill="#888"/><rect x="25.5" y="71" width="2" height="1.3" fill="#e8602a"/></svg></div></div>
<div class="a" style="left:49.3px;top:140.9px;width:20px;text-align:right;font-size:11.8px;line-height:13px;color:#e3e3e3;-webkit-text-stroke:.25px #e3e3e3">33</div>
<div class="a" style="left:76px;top:143.4px;width:57px;height:78px;border:1.2px solid #424242;border-radius:8.5px;background:#131313;padding:1.4px;font-size:0"><div style="width:51.8px;height:72.8px;border-radius:6.5px;background:#fff;overflow:hidden"><svg width="51.8" height="72.8" viewBox="0 0 56 77" preserveAspectRatio="none"><rect x="4" y="4.0" width="24" height=".8" fill="#999"/><rect x="4" y="5.8" width="20" height=".8" fill="#999"/><rect x="12" y="13" width="26" height="42" fill="none" stroke="#aaa" stroke-width=".5"/><rect x="15" y="14" width="4" height="26" fill="none" stroke="#bbb" stroke-width=".5"/><rect x="22" y="22" width="5" height="8" rx="1" fill="#333"/><rect x="29" y="20" width="5" height="10" rx="1" fill="#444"/><path d="M22 33c3-3 12-4 16-1l-2 6c-4 1-11 1-14-1z" fill="#e7b81c"/><rect x="17" y="35" width="5" height="3.5" fill="#333"/><circle cx="29" cy="46" r="2.5" fill="#e7b81c"/><rect x="27" y="50" width="3" height="3" fill="#333"/><line x1="6" y1="9" x2="18" y2="9" stroke="#3cbf72" stroke-width=".7"/><line x1="6" y1="16" x2="14" y2="16" stroke="#3cbf72" stroke-width=".7"/><line x1="30" y1="15" x2="36" y2="19" stroke="#3cbf72" stroke-width=".7"/><rect x="4" y="9" width="5" height=".9" fill="#888"/><rect x="4" y="16" width="5" height=".9" fill="#888"/><rect x="4" y="24" width="5" height=".9" fill="#888"/><rect x="40" y="33" width="5" height=".9" fill="#888"/><rect x="40" y="45" width="5" height=".9" fill="#888"/><rect x="40" y="38" width="5" height=".9" fill="#888"/><rect x="20" y="42" width="5" height=".9" fill="#888"/><rect x="24" y="58" width="5" height=".9" fill="#888"/><rect x="25.5" y="71" width="2" height="1.3" fill="#e8602a"/></svg></div></div>
<div class="a" style="left:49.3px;top:226.1px;width:20px;text-align:right;font-size:11.8px;line-height:13px;color:#e3e3e3;-webkit-text-stroke:.25px #e3e3e3">34</div>
<div class="a" style="left:76px;top:228.6px;width:57px;height:78px;border:1.2px solid #424242;border-radius:8.5px;background:#131313;padding:1.4px;font-size:0"><div style="width:51.8px;height:72.8px;border-radius:6.5px;background:#fff;overflow:hidden"><svg width="51.8" height="72.8" viewBox="0 0 56 77" preserveAspectRatio="none"><rect x="4" y="4.0" width="24" height=".8" fill="#999"/><rect x="4" y="5.8" width="20" height=".8" fill="#999"/><rect x="4" y="7.6" width="20" height=".8" fill="#999"/><rect x="28" y="12" width="16" height="9" rx="1" fill="#f28a1e"/><rect x="22" y="24" width="10" height="6" fill="#ccc" stroke="#777" stroke-width=".4"/><rect x="20" y="31" width="20" height="20" fill="#bfbfbc" stroke="#666" stroke-width=".4"/><rect x="22" y="45" width="12" height="7" fill="#444"/><rect x="38" y="24" width="8" height="2.2" fill="#f3e03a"/><rect x="40" y="47" width="10" height="3.5" fill="#f3e03a"/><circle cx="32" cy="63" r="2" fill="#1b3fe0"/><circle cx="38" cy="60" r="2" fill="#1b3fe0"/><circle cx="22" cy="57" r="1.5" fill="#333"/><circle cx="26" cy="60" r="1.5" fill="#555"/><line x1="10" y1="14" x2="24" y2="14" stroke="#3cbf72" stroke-width=".7"/><line x1="10" y1="34" x2="20" y2="36" stroke="#3cbf72" stroke-width=".7"/><rect x="4" y="14" width="5" height=".9" fill="#888"/><rect x="4" y="34" width="5" height=".9" fill="#888"/><rect x="4" y="42" width="5" height=".9" fill="#888"/><rect x="42" y="14" width="5" height=".9" fill="#888"/><rect x="42" y="30" width="5" height=".9" fill="#888"/><rect x="42" y="55" width="5" height=".9" fill="#888"/><rect x="30" y="68" width="5" height=".9" fill="#888"/><rect x="16" y="62" width="5" height=".9" fill="#888"/><rect x="25.5" y="71" width="2" height="1.3" fill="#e8602a"/></svg></div></div>
<div class="a" style="left:49.3px;top:311.3px;width:20px;text-align:right;font-size:11.8px;line-height:13px;color:#e3e3e3;-webkit-text-stroke:.25px #e3e3e3">35</div>
<div class="a" style="left:76px;top:313.8px;width:57px;height:78px;border:1.2px solid #424242;border-radius:8.5px;background:#131313;padding:1.4px;font-size:0"><div style="width:51.8px;height:72.8px;border-radius:6.5px;background:#fff;overflow:hidden"><svg width="51.8" height="72.8" viewBox="0 0 56 77" preserveAspectRatio="none"><rect x="4" y="4.0" width="24" height=".8" fill="#999"/><rect x="4" y="5.8" width="20" height=".8" fill="#999"/><rect x="4" y="7.6" width="20" height=".8" fill="#999"/><rect x="8" y="12" width="12" height="13" fill="none" stroke="#555" stroke-width=".6"/><path d="M12 14v8h5" fill="none" stroke="#f28a1e" stroke-width="1"/><rect x="28" y="12" width="16" height="9" rx="1" fill="#f28a1e"/><rect x="22" y="24" width="10" height="6" fill="#ccc" stroke="#777" stroke-width=".4"/><rect x="20" y="31" width="20" height="20" fill="#bfbfbc" stroke="#666" stroke-width=".4"/><rect x="22" y="45" width="12" height="7" fill="#444"/><rect x="38" y="24" width="8" height="2.2" fill="#f3e03a"/><rect x="40" y="47" width="10" height="3.5" fill="#f3e03a"/><circle cx="32" cy="63" r="2" fill="#1b3fe0"/><circle cx="38" cy="60" r="2" fill="#1b3fe0"/><circle cx="22" cy="57" r="1.5" fill="#333"/><circle cx="26" cy="60" r="1.5" fill="#555"/><line x1="10" y1="14" x2="24" y2="14" stroke="#3cbf72" stroke-width=".7"/><line x1="10" y1="34" x2="20" y2="36" stroke="#3cbf72" stroke-width=".7"/><rect x="4" y="14" width="5" height=".9" fill="#888"/><rect x="4" y="34" width="5" height=".9" fill="#888"/><rect x="4" y="42" width="5" height=".9" fill="#888"/><rect x="42" y="14" width="5" height=".9" fill="#888"/><rect x="42" y="30" width="5" height=".9" fill="#888"/><rect x="42" y="55" width="5" height=".9" fill="#888"/><rect x="30" y="68" width="5" height=".9" fill="#888"/><rect x="16" y="62" width="5" height=".9" fill="#888"/><rect x="25.5" y="71" width="2" height="1.3" fill="#e8602a"/></svg></div></div>
<div class="a" style="left:49.3px;top:396.5px;width:20px;text-align:right;font-size:11.8px;line-height:13px;color:#e3e3e3;-webkit-text-stroke:.25px #e3e3e3">36</div>
<div class="a" style="left:75px;top:398.5px;width:59px;height:80px;border:2px solid #a8c7fa;border-radius:9px;background:#131313;padding:2px;font-size:0"><div style="width:51px;height:72px;border-radius:6.5px;background:#fff;overflow:hidden"><svg width="51" height="72" viewBox="0 0 56 77" preserveAspectRatio="none"><rect x="4" y="3.0" width="24" height=".8" fill="#999"/><rect x="4" y="4.8" width="20" height=".8" fill="#999"/><g stroke="#3cbf72" stroke-width=".6" fill="none"><path d="M28 9l5-1M26 13l-8-3M29 17l6-3M19 19l-8 0M38 17l8-1M30 22l14 3M28 24l8 2"/><path d="M40 37l8 6-4 6M14 38H6M18 56H10M19 61H10M27 58l6 3M24 67l-6 2M30 67l6 3M37 55l6-1"/></g><rect x="27" y="9" width="3" height="5" fill="#bbb"/><rect x="18" y="15" width="4" height="5" fill="#c4c4c4"/><rect x="27" y="16" width="4" height="6" fill="#c4c4c4"/><rect x="36" y="15" width="4" height="5" fill="#c4c4c4"/><rect x="18" y="21" width="4" height="2" fill="#bbb"/><rect x="27" y="23" width="4" height="2" fill="#bbb"/><path d="M12 31l26 2 1.2 5M12 31l1.5 4" fill="none" stroke="#333" stroke-width="1.1"/><path d="M10.5 34l28.5 2.5 5 12.5-28.5-2z" fill="#999994"/><path d="M10.5 34l28.5 2.5v1.2l-28.5-2.3z" fill="#ddd"/><rect x="13" y="37" width="7" height="6" fill="#e8c200"/><circle cx="17" cy="41" r="3.3" fill="#ee2244"/><rect x="27" y="38" width="6" height="3.5" fill="#fafafa"/><rect x="28" y="42" width="5" height="1.5" fill="#8a6a20"/><path d="M16 44l20 1.5 2 5.5-20-1.5z" fill="#eeeeea"/><path d="M17 44.2l3 .2 1.5 5.5-3-.2zM23 44.6l3 .2 1.5 5.5-3-.2zM29 45l3 .2 1.5 5.5-3-.2z" fill="#f05014"/><circle cx="46" cy="41" r="1.8" fill="#222"/><circle cx="48" cy="48" r="1.8" fill="#222"/><path d="M36 43l4 13" stroke="#999" stroke-width="1"/><rect x="17" y="54" width="2.5" height="8" fill="#aaa"/><ellipse cx="25" cy="59" rx="2" ry="2.2" fill="#666"/><path d="M29 53l7 .5 1.5 4-7-.5z" fill="#f4eef0" stroke="#ddd" stroke-width=".4"/><ellipse cx="21" cy="67" rx="1.8" ry="2" fill="#666"/><ellipse cx="26" cy="67" rx="1.8" ry="2" fill="#666"/><ellipse cx="30.5" cy="66.5" rx="1.8" ry="2.2" fill="#555"/><ellipse cx="35" cy="67.5" rx="1.8" ry="2" fill="#777"/><rect x="3" y="38" width="5" height=".9" fill="#888"/><rect x="40" y="43" width="5" height=".9" fill="#888"/><rect x="3" y="56" width="5" height=".9" fill="#888"/><rect x="3" y="61" width="5" height=".9" fill="#888"/><rect x="40" y="54" width="5" height=".9" fill="#888"/><rect x="12" y="69" width="5" height=".9" fill="#888"/><rect x="36" y="70" width="5" height=".9" fill="#888"/><rect x="40" y="16" width="5" height=".9" fill="#888"/><rect x="5" y="10" width="5" height=".9" fill="#888"/><rect x="44" y="25" width="5" height=".9" fill="#888"/><rect x="25.5" y="74" width="2" height="1.3" fill="#e8602a"/></svg></div></div>
</div>
<div class="a" style="left:139.8px;top:410px;width:6px;height:56.5px;border-radius:3px;background:#5f5f5f"></div>
<div class="a" style="left:-16px;top:534px;width:57px;height:33px;border-radius:17px;background:#262626"></div>
<svg class="a" style="left:20.5px;top:545px" width="7" height="11" viewBox="0 0 7 11"><path d="M6 1L1.5 5.5 6 10" fill="none" stroke="#e3e3e3" stroke-width="1.5"/></svg>
<div class="a" style="left:1186.5px;top:428px;width:6px;height:40px;border-radius:3px;background:#5f5f5f"></div>
<div class="a" style="left:330px;top:106px;width:661px;height:476px;background:#fff;overflow:hidden"><svg class="a" style="left:0;top:0" width="661" height="477" viewBox="330 236 661 477"><defs><linearGradient id="pgb" x1="0" y1="0" x2="0" y2="1"><stop offset="0" stop-color="#000" stop-opacity="0"/><stop offset="1" stop-color="#000" stop-opacity=".045"/></linearGradient></defs><polygon points="590.2,258.6 597.7,272.6 597.7,294.9 590.2,301.4" fill="#a6a6a6" stroke="#8a8a8a" stroke-width="0.5" />
<polygon points="578.0,260.1 590.2,258.6 590.2,301.4 578.0,302.9" fill="#dedede" stroke="#8f8f8f" stroke-width="0.5" />
<line x1="578.0" y1="264.8" x2="590.2" y2="263.2" stroke="#9a9a9a" stroke-width=".5"/>
<line x1="578.0" y1="270.3" x2="590.2" y2="268.8" stroke="#9a9a9a" stroke-width=".5"/>
<line x1="578.0" y1="281.0" x2="590.2" y2="279.5" stroke="#9a9a9a" stroke-width=".5"/>
<polygon points="579.0,269.8 589.2,268.8 589.2,278.6 579.0,279.5" fill="#f8f8f8" stroke="none" stroke-width="0.6" />
<polygon points="579.0,263.2 589.2,262.3 589.2,267.9 579.0,268.8" fill="#f2f2f2" stroke="none" stroke-width="0.6" />
<rect x="580.6" y="286.5" width="2.2" height="7.4" rx="1" fill="#f6f6f6" stroke="#8a8a8a" stroke-width=".4"/>
<circle cx="581.7" cy="294.9" r="1.2" fill="#2bb24c"/>
<rect x="585.4" y="286.5" width="2.2" height="7.4" rx="1" fill="#f6f6f6" stroke="#8a8a8a" stroke-width=".4"/>
<circle cx="586.5" cy="294.9" r="1.2" fill="#2bb24c"/>
<rect x="580.5" y="302.4" width="8.2" height="4.7" fill="#ececec" stroke="#999" stroke-width=".4"/>
<polygon points="610.0,259.4 617.5,273.5 617.5,296.1 610.0,302.6" fill="#a6a6a6" stroke="#8a8a8a" stroke-width="0.5" />
<polygon points="597.0,260.9 610.0,259.4 610.0,302.6 597.0,304.1" fill="#dedede" stroke="#8f8f8f" stroke-width="0.5" />
<line x1="597.0" y1="265.6" x2="610.0" y2="264.1" stroke="#9a9a9a" stroke-width=".5"/>
<line x1="597.0" y1="271.2" x2="610.0" y2="269.7" stroke="#9a9a9a" stroke-width=".5"/>
<line x1="597.0" y1="282.0" x2="610.0" y2="280.5" stroke="#9a9a9a" stroke-width=".5"/>
<polygon points="598.0,270.7 609.0,269.7 609.0,279.6 598.0,280.5" fill="#f8f8f8" stroke="none" stroke-width="0.6" />
<polygon points="598.0,264.1 609.0,263.2 609.0,268.8 598.0,269.7" fill="#f2f2f2" stroke="none" stroke-width="0.6" />
<rect x="599.8" y="287.6" width="2.2" height="7.5" rx="1" fill="#f6f6f6" stroke="#8a8a8a" stroke-width=".4"/>
<circle cx="600.9" cy="296.1" r="1.2" fill="#2bb24c"/>
<rect x="605.0" y="287.6" width="2.2" height="7.5" rx="1" fill="#f6f6f6" stroke="#8a8a8a" stroke-width=".4"/>
<circle cx="606.1" cy="296.1" r="1.2" fill="#2bb24c"/>
<rect x="599.5" y="303.6" width="9.0" height="4.7" fill="#ececec" stroke="#999" stroke-width=".4"/>
<polygon points="568.9,307.2 602.6,310.2 607.6,335.2 573.9,332.2" fill="#cdcdcd" stroke="#7d7d7d" stroke-width="0.6" />
<rect x="570.4" y="303.2" width="9.2" height="4.5" fill="#ececec" stroke="#8a8a8a" stroke-width=".4"/>
<rect x="580.6" y="304.2" width="9.2" height="4.5" fill="#ececec" stroke="#8a8a8a" stroke-width=".4"/>
<rect x="590.9" y="305.2" width="9.2" height="4.5" fill="#ececec" stroke="#8a8a8a" stroke-width=".4"/>
<ellipse cx="589.2" cy="321.6" rx="11.6" ry="6.8" fill="#a9a9a9" stroke="#7a7a7a" stroke-width=".5" transform="rotate(10 588.2 321.6)"/>
<ellipse cx="590.2" cy="322.8" rx="10.4" ry="5.3" fill="#fafafa" transform="rotate(10 588.2 322.8)"/>
<rect x="573.9" y="328.2" width="5" height="3" fill="#f4f4f4" stroke="#888" stroke-width=".3"/>
<rect x="598.6" y="330.2" width="5" height="3" fill="#f4f4f4" stroke="#888" stroke-width=".3"/>
<polygon points="670.4,231.0 679.4,242.5 679.4,261.0 670.4,266.3" fill="#a6a6a6" stroke="#8a8a8a" stroke-width="0.5" />
<polygon points="657.2,232.5 670.4,231.0 670.4,266.3 657.2,267.8" fill="#dedede" stroke="#8f8f8f" stroke-width="0.5" />
<line x1="657.2" y1="236.3" x2="670.4" y2="234.8" stroke="#9a9a9a" stroke-width=".5"/>
<line x1="657.2" y1="240.9" x2="670.4" y2="239.4" stroke="#9a9a9a" stroke-width=".5"/>
<line x1="657.2" y1="249.8" x2="670.4" y2="248.3" stroke="#9a9a9a" stroke-width=".5"/>
<polygon points="658.2,240.2 669.4,239.4 669.4,247.5 658.2,248.3" fill="#f8f8f8" stroke="none" stroke-width="0.6" />
<polygon points="658.2,234.8 669.4,234.1 669.4,238.7 658.2,239.4" fill="#f2f2f2" stroke="none" stroke-width="0.6" />
<rect x="660.1" y="254.0" width="2.2" height="6.1" rx="1" fill="#f6f6f6" stroke="#8a8a8a" stroke-width=".4"/>
<circle cx="661.2" cy="261.0" r="1.2" fill="#d01818"/>
<rect x="665.3" y="254.0" width="2.2" height="6.1" rx="1" fill="#f6f6f6" stroke="#8a8a8a" stroke-width=".4"/>
<circle cx="666.4" cy="261.0" r="1.2" fill="#d01818"/>
<rect x="659.7" y="267.3" width="9.2" height="3.8" fill="#ececec" stroke="#999" stroke-width=".4"/>
<polygon points="664.6,265.3 670.6,280.6 670.6,305.1 664.6,312.2" fill="#a6a6a6" stroke="#8a8a8a" stroke-width="0.5" />
<polygon points="648.1,266.8 664.6,265.3 664.6,312.2 648.1,313.7" fill="#dedede" stroke="#8f8f8f" stroke-width="0.5" />
<line x1="648.1" y1="271.9" x2="664.6" y2="270.4" stroke="#9a9a9a" stroke-width=".5"/>
<line x1="648.1" y1="278.0" x2="664.6" y2="276.5" stroke="#9a9a9a" stroke-width=".5"/>
<line x1="648.1" y1="289.8" x2="664.6" y2="288.2" stroke="#9a9a9a" stroke-width=".5"/>
<polygon points="649.1,277.5 663.6,276.5 663.6,287.2 649.1,288.2" fill="#f8f8f8" stroke="none" stroke-width="0.6" />
<polygon points="649.1,270.4 663.6,269.4 663.6,275.5 649.1,276.5" fill="#f2f2f2" stroke="none" stroke-width="0.6" />
<rect x="652.0" y="295.9" width="2.2" height="8.2" rx="1" fill="#f6f6f6" stroke="#8a8a8a" stroke-width=".4"/>
<circle cx="653.1" cy="305.1" r="1.2" fill="#2bb24c"/>
<rect x="658.5" y="295.9" width="2.2" height="8.2" rx="1" fill="#f6f6f6" stroke="#8a8a8a" stroke-width=".4"/>
<circle cx="659.6" cy="305.1" r="1.2" fill="#2bb24c"/>
<rect x="650.6" y="313.2" width="12.5" height="5.1" fill="#ececec" stroke="#999" stroke-width=".4"/>
<polygon points="684.5,267.0 691.8,282.5 691.8,307.4 684.5,314.7" fill="#a6a6a6" stroke="#8a8a8a" stroke-width="0.5" />
<polygon points="669.5,268.5 684.5,267.0 684.5,314.7 669.5,316.2" fill="#dedede" stroke="#8f8f8f" stroke-width="0.5" />
<line x1="669.5" y1="273.7" x2="684.5" y2="272.2" stroke="#9a9a9a" stroke-width=".5"/>
<line x1="669.5" y1="279.9" x2="684.5" y2="278.4" stroke="#9a9a9a" stroke-width=".5"/>
<line x1="669.5" y1="291.8" x2="684.5" y2="290.3" stroke="#9a9a9a" stroke-width=".5"/>
<polygon points="670.5,279.4 683.5,278.4 683.5,289.3 670.5,290.3" fill="#f8f8f8" stroke="none" stroke-width="0.6" />
<polygon points="670.5,272.2 683.5,271.1 683.5,277.4 670.5,278.4" fill="#f2f2f2" stroke="none" stroke-width="0.6" />
<rect x="672.9" y="298.1" width="2.2" height="8.3" rx="1" fill="#f6f6f6" stroke="#8a8a8a" stroke-width=".4"/>
<circle cx="674.0" cy="307.4" r="1.2" fill="#2bb24c"/>
<rect x="678.9" y="298.1" width="2.2" height="8.3" rx="1" fill="#f6f6f6" stroke="#8a8a8a" stroke-width=".4"/>
<circle cx="680.0" cy="307.4" r="1.2" fill="#2bb24c"/>
<rect x="672.0" y="315.7" width="11.0" height="5.2" fill="#ececec" stroke="#999" stroke-width=".4"/>
<polygon points="638.2,319.4 675.2,322.4 680.2,349.4 643.2,346.4" fill="#cdcdcd" stroke="#7d7d7d" stroke-width="0.6" />
<rect x="639.7" y="315.4" width="10.3" height="4.5" fill="#ececec" stroke="#8a8a8a" stroke-width=".4"/>
<rect x="651.0" y="316.4" width="10.3" height="4.5" fill="#ececec" stroke="#8a8a8a" stroke-width=".4"/>
<rect x="662.4" y="317.4" width="10.3" height="4.5" fill="#ececec" stroke="#8a8a8a" stroke-width=".4"/>
<ellipse cx="660.2" cy="334.9" rx="12.6" ry="7.3" fill="#a9a9a9" stroke="#7a7a7a" stroke-width=".5" transform="rotate(10 659.2 334.9)"/>
<ellipse cx="661.2" cy="336.2" rx="11.3" ry="5.6" fill="#fafafa" transform="rotate(10 659.2 336.2)"/>
<rect x="643.2" y="342.4" width="5" height="3" fill="#f4f4f4" stroke="#888" stroke-width=".3"/>
<rect x="671.2" y="344.4" width="5" height="3" fill="#f4f4f4" stroke="#888" stroke-width=".3"/>
<polygon points="780.0,252.1 789.0,267.7 789.0,292.7 780.0,299.9" fill="#a6a6a6" stroke="#8a8a8a" stroke-width="0.5" />
<polygon points="766.7,253.6 780.0,252.1 780.0,299.9 766.7,301.4" fill="#dedede" stroke="#8f8f8f" stroke-width="0.5" />
<line x1="766.7" y1="258.8" x2="780.0" y2="257.3" stroke="#9a9a9a" stroke-width=".5"/>
<line x1="766.7" y1="265.0" x2="780.0" y2="263.5" stroke="#9a9a9a" stroke-width=".5"/>
<line x1="766.7" y1="277.0" x2="780.0" y2="275.5" stroke="#9a9a9a" stroke-width=".5"/>
<polygon points="767.7,264.6 779.0,263.5 779.0,274.5 767.7,275.5" fill="#f8f8f8" stroke="none" stroke-width="0.6" />
<polygon points="767.7,257.3 779.0,256.3 779.0,262.5 767.7,263.5" fill="#f2f2f2" stroke="none" stroke-width="0.6" />
<rect x="769.6" y="283.3" width="2.2" height="8.3" rx="1" fill="#f6f6f6" stroke="#8a8a8a" stroke-width=".4"/>
<circle cx="770.7" cy="292.7" r="1.2" fill="#d01818"/>
<rect x="774.9" y="283.3" width="2.2" height="8.3" rx="1" fill="#f6f6f6" stroke="#8a8a8a" stroke-width=".4"/>
<circle cx="776.0" cy="292.7" r="1.2" fill="#d01818"/>
<rect x="769.2" y="300.9" width="9.3" height="5.2" fill="#ececec" stroke="#999" stroke-width=".4"/>
<polygon points="803.0,253.8 810.4,269.4 810.4,294.4 803.0,301.6" fill="#a6a6a6" stroke="#8a8a8a" stroke-width="0.5" />
<polygon points="788.2,255.3 803.0,253.8 803.0,301.6 788.2,303.1" fill="#dedede" stroke="#8f8f8f" stroke-width="0.5" />
<line x1="788.2" y1="260.5" x2="803.0" y2="259.0" stroke="#9a9a9a" stroke-width=".5"/>
<line x1="788.2" y1="266.7" x2="803.0" y2="265.2" stroke="#9a9a9a" stroke-width=".5"/>
<line x1="788.2" y1="278.7" x2="803.0" y2="277.2" stroke="#9a9a9a" stroke-width=".5"/>
<polygon points="789.2,266.3 802.0,265.2 802.0,276.2 789.2,277.2" fill="#f8f8f8" stroke="none" stroke-width="0.6" />
<polygon points="789.2,259.0 802.0,258.0 802.0,264.2 789.2,265.2" fill="#f2f2f2" stroke="none" stroke-width="0.6" />
<rect x="791.5" y="285.0" width="2.2" height="8.3" rx="1" fill="#f6f6f6" stroke="#8a8a8a" stroke-width=".4"/>
<circle cx="792.6" cy="294.4" r="1.2" fill="#2bb24c"/>
<rect x="797.5" y="285.0" width="2.2" height="8.3" rx="1" fill="#f6f6f6" stroke="#8a8a8a" stroke-width=".4"/>
<circle cx="798.6" cy="294.4" r="1.2" fill="#2bb24c"/>
<rect x="790.7" y="302.6" width="10.8" height="5.2" fill="#ececec" stroke="#999" stroke-width=".4"/>
<polygon points="756.9,306.2 793.9,309.2 798.9,336.2 761.9,333.2" fill="#cdcdcd" stroke="#7d7d7d" stroke-width="0.6" />
<rect x="758.4" y="302.2" width="10.3" height="4.5" fill="#ececec" stroke="#8a8a8a" stroke-width=".4"/>
<rect x="769.7" y="303.2" width="10.3" height="4.5" fill="#ececec" stroke="#8a8a8a" stroke-width=".4"/>
<rect x="781.1" y="304.2" width="10.3" height="4.5" fill="#ececec" stroke="#8a8a8a" stroke-width=".4"/>
<ellipse cx="778.9" cy="321.7" rx="12.6" ry="7.3" fill="#a9a9a9" stroke="#7a7a7a" stroke-width=".5" transform="rotate(10 777.9 321.7)"/>
<ellipse cx="779.9" cy="323.0" rx="11.3" ry="5.6" fill="#fafafa" transform="rotate(10 777.9 323.0)"/>
<rect x="761.9" y="329.2" width="5" height="3" fill="#f4f4f4" stroke="#888" stroke-width=".3"/>
<rect x="789.9" y="331.2" width="5" height="3" fill="#f4f4f4" stroke="#888" stroke-width=".3"/>
<polygon points="471.2,349.9 752.0,370.0 764.4,415.0 753.8,415.0 743.0,384.0 482.5,364.0 491.4,395.0 479.0,395.0" fill="#3a3a3a" stroke="#222" stroke-width="0.6" />
<polygon points="471.2,349.9 752.0,370.0 743.0,384.0 482.5,364.0" fill="#474747" stroke="#2a2a2a" stroke-width="0.5" />
<polygon points="521.5,375.5 597.8,382.0 604.0,397.0 519.0,395.0" fill="#fbfbfb" stroke="#777" stroke-width="0.6" />
<polygon points="597.8,382.0 604.0,397.0 590.0,397.0" fill="#b8b8b8" stroke="none" stroke-width="0.6" />
<polygon points="453.5,407.4 761.0,428.6 813.8,604.6 502.0,584.7" fill="#8b8b86" stroke="#5e5e5a" stroke-width="0.6" />
<polygon points="761.0,428.6 765.0,420.0 818.0,598.0 813.8,604.6" fill="#bdbdb3" stroke="#6e6e68" stroke-width="0.5" />
<polygon points="452.4,392.5 764.4,414.5 761.0,428.6 453.5,407.4" fill="#dcdccf" stroke="#8e8e80" stroke-width="0.6" />
<line x1="453" y1="397" x2="763.5" y2="419" stroke="#a9a99a" stroke-width=".6"/>
<polygon points="752.5,449.0 765.0,450.0 770.0,466.0 757.0,465.0" fill="#f4f4f4" stroke="#666" stroke-width="0.5" />
<polygon points="786.0,561.0 800.0,562.0 804.0,578.0 790.0,577.0" fill="#f4f4f4" stroke="#666" stroke-width="0.5" />
<polygon points="453.5,407.4 458.0,408.0 506.0,585.0 502.0,584.7" fill="#77776f" stroke="none" stroke-width="0.6" />
<polygon points="510.3,436.0 588.0,441.0 598.2,489.0 519.0,484.0" fill="#e4b100" stroke="#a88300" stroke-width="0.5" />
<polygon points="505.2,430.8 586.8,435.8 588.0,441.0 510.3,436.0" fill="#f6e600" stroke="#b59a00" stroke-width="0.5" />
<polygon points="586.8,435.8 592.0,437.0 602.0,488.0 598.2,489.0" fill="#c59900" stroke="none" stroke-width="0.6" />
<ellipse cx="548.5" cy="474" rx="37" ry="29" fill="#e8083c" stroke="#a0062a" stroke-width=".6" transform="rotate(10 548 474)"/>
<ellipse cx="547" cy="469" rx="35" ry="24" fill="#ff1a4e" transform="rotate(10 547 469)"/>
<ellipse cx="550" cy="480" rx="30" ry="19" fill="#f0083e" stroke="#c00634" stroke-width=".8" transform="rotate(10 550 480)"/>
<ellipse cx="551" cy="481" rx="24" ry="14" fill="#e00638" transform="rotate(10 551 481)"/>
<polygon points="539.0,465.0 552.0,466.5 558.0,505.0 544.0,504.0" fill="#ff1a4e" stroke="#b00630" stroke-width="0.5" />
<polygon points="552.0,466.5 557.0,470.0 561.0,503.0 558.0,505.0" fill="#c8062e" stroke="none" stroke-width="0.6" />
<rect x="524" y="449" width="3" height="7" fill="#e8c200"/>
<polygon points="507.0,493.0 526.0,493.0 528.0,504.2 508.0,504.0" fill="#2a2a2a" stroke="#eee" stroke-width="1" />
<ellipse cx="591.3" cy="504.8" rx="12.3" ry="7" fill="#f8f8f8" stroke="#666" stroke-width=".5"/>
<polygon points="647.4,441.0 709.5,444.6 716.6,476.5 652.8,473.0" fill="#fbfbfb" stroke="#555" stroke-width="0.6" />
<polygon points="657.0,477.0 719.0,480.0 722.0,497.8 661.0,495.0" fill="#b58a22" stroke="#6b5010" stroke-width="0.5" />
<polygon points="665.0,480.0 671.0,490.0 662.0,491.0" fill="#1a1a1a" stroke="none" stroke-width="0.6" />
<line x1="676" y1="482.0" x2="716" y2="484.0" stroke="#4a3608" stroke-width=".6"/>
<line x1="676" y1="485.5" x2="716" y2="487.5" stroke="#4a3608" stroke-width=".6"/>
<line x1="676" y1="489.0" x2="716" y2="491.0" stroke="#4a3608" stroke-width=".6"/>
<line x1="676" y1="492.5" x2="716" y2="494.5" stroke="#4a3608" stroke-width=".6"/>
<circle cx="727" cy="443.5" r="1.8" fill="#eee"/>
<circle cx="767" cy="586" r="1.8" fill="#eee"/>
<polygon points="521.4,518.1 747.3,532.0 767.7,604.2 540.7,587.1" fill="#f0f0ec" stroke="#888" stroke-width="0.5" />
<polygon points="526.8,520.7 573.9,523.9 586.7,575.3 540.7,573.2" fill="#f6f6f4" stroke="#444" stroke-width="0.6" />
<polygon points="528.0,521.0 550.0,522.5 563.0,574.3 541.0,573.3" fill="#f05014" stroke="none" stroke-width="0.6" />
<ellipse cx="569" cy="569" rx="8" ry="5" fill="none" stroke="#111" stroke-width="2"/><line x1="562" y1="566" x2="576" y2="572" stroke="#111" stroke-width="1.3"/>
<polygon points="583.5,525.0 630.6,528.2 644.5,580.7 598.5,578.5" fill="#f6f6f4" stroke="#444" stroke-width="0.6" />
<polygon points="584.5,525.5 607.0,527.0 620.0,579.5 599.0,578.5" fill="#f05014" stroke="none" stroke-width="0.6" />
<rect x="604" y="556" width="9" height="10" fill="#e86a2a" stroke="#222" stroke-width=".6"/>
<polygon points="641.3,529.3 687.4,532.5 701.3,585.0 654.2,581.7" fill="#f6f6f4" stroke="#444" stroke-width="0.6" />
<polygon points="642.0,529.5 660.0,531.0 670.0,584.0 654.5,582.0" fill="#f05014" stroke="none" stroke-width="0.6" />
<ellipse cx="667" cy="547" rx="18" ry="10" fill="none" stroke="#333" stroke-width=".5"/>
<line x1="649.0" y1="547.0" x2="685.0" y2="547.0" stroke="#333" stroke-width=".4"/>
<line x1="650.1" y1="543.6" x2="683.9" y2="550.4" stroke="#333" stroke-width=".4"/>
<line x1="653.2" y1="540.6" x2="680.8" y2="553.4" stroke="#333" stroke-width=".4"/>
<line x1="658.0" y1="538.3" x2="676.0" y2="555.7" stroke="#333" stroke-width=".4"/>
<line x1="663.9" y1="537.2" x2="670.1" y2="556.8" stroke="#333" stroke-width=".4"/>
<line x1="670.1" y1="537.2" x2="663.9" y2="556.8" stroke="#333" stroke-width=".4"/>
<line x1="676.0" y1="538.3" x2="658.0" y2="555.7" stroke="#333" stroke-width=".4"/>
<line x1="680.8" y1="540.6" x2="653.2" y2="553.4" stroke="#333" stroke-width=".4"/>
<line x1="683.9" y1="543.6" x2="650.1" y2="550.4" stroke="#333" stroke-width=".4"/>
<ellipse cx="666" cy="573" rx="8" ry="5" fill="none" stroke="#111" stroke-width="2"/><line x1="659" y1="570" x2="673" y2="576" stroke="#111" stroke-width="1.3"/>
<polygon points="699.2,533.6 746.3,536.8 758.0,588.2 712.0,585.0" fill="#f6f6f4" stroke="#444" stroke-width="0.6" />
<polygon points="700.0,534.0 722.0,535.5 735.0,587.0 712.5,585.0" fill="#f05014" stroke="none" stroke-width="0.6" />
<circle cx="731" cy="571" r="5.5" fill="#f05014" stroke="#c33" stroke-width="1"/>
<polygon points="599.6,580.7 646.0,582.0 647.8,593.5 601.0,592.0" fill="#f6f6f4" stroke="#333" stroke-width="0.6" />
<polygon points="600.5,581.0 620.0,581.8 621.5,592.5 601.5,592.0" fill="#f05014" stroke="none" stroke-width="0.6" />
<text x="700" y="594.5" font-size="6.5" font-weight="bold" fill="#111" font-family="Liberation Sans" transform="rotate(4 700 594)">www.</text>
<text x="745" y="598" font-size="6" font-weight="bold" fill="#111" font-family="Liberation Sans" transform="rotate(4 745 598)">.net</text>
<path d="M549 561h6v3h-6zM553 564v3M546 566c1-1 2-1 3 0" fill="none" stroke="#fff" stroke-width="1"/>
<path d="M607 572h8M630 575h9l-2-2M630 575l0 0" fill="none" stroke="#fff" stroke-width="1.4"/><path d="M630 573h9l2 2-2 2h-9z" fill="none" stroke="#444" stroke-width=".5"/>
<text x="604" y="590" font-size="6" font-weight="bold" fill="#111" font-family="Liberation Sans">F1</text><path d="M622 584v5l-2-2M622 589l2-2" fill="none" stroke="#111" stroke-width="1"/><rect x="627" y="584" width="12" height="6" fill="none" stroke="#333" stroke-width=".5"/>
<path d="M745 578c2-2 5-1 5 1s-3 3-5 2" fill="none" stroke="#333" stroke-width=".7"/>
<path d="M735 594l6 1 2 4-4 3-5-2z" fill="none" stroke="#e85a20" stroke-width="1.3"/>
<path d="M488 426 Q480 445 482 458 L518 590 Q522 600 527 590 L529 572" fill="none" stroke="#6a6a58" stroke-width="11" stroke-linecap="round" stroke-linejoin="round"/>
<path d="M488 426 Q480 445 482 458 L518 590 Q522 600 527 590 L529 572" fill="none" stroke="#a8a892" stroke-width="8.5" stroke-linecap="round" stroke-linejoin="round"/>
<path d="M487 428 Q481 445 483 456" fill="none" stroke="#d8d8c6" stroke-width="3" stroke-linecap="round"/>
<path d="M712 505 Q709 515 712 520 L745 673 Q749 683 754 672 L757 650" fill="none" stroke="#5e5e4c" stroke-width="10.5" stroke-linecap="round" stroke-linejoin="round"/>
<path d="M712 505 Q709 515 712 520 L745 673 Q749 683 754 672 L757 650" fill="none" stroke="#9a9a84" stroke-width="8" stroke-linecap="round" stroke-linejoin="round"/>
<path d="M712 507 L744 665" fill="none" stroke="#bcbca8" stroke-width="1.8" stroke-linecap="round"/>
<polygon points="822.1,445.0 828.1,441.0 844.1,441.0 852.1,445.0 852.1,471.0 844.1,479.0 828.1,479.0 822.1,471.0" fill="#1e1e1e" stroke="#111" stroke-width="0.5" />
<rect x="828.1" y="461" width="18" height="14" fill="#3a3a3a"/>
<ellipse cx="837.1" cy="465" rx="7" ry="3" fill="#2a2a2a"/>
<rect x="833.1" y="434" width="7" height="22" rx="3" fill="#f2f2f2" stroke="#999" stroke-width=".4"/>
<ellipse cx="836.6" cy="434" rx="4" ry="2" fill="none" stroke="#888" stroke-width=".6"/>
<polygon points="852.7,555.0 858.7,551.0 874.7,551.0 882.7,555.0 882.7,581.0 874.7,589.0 858.7,589.0 852.7,581.0" fill="#1e1e1e" stroke="#111" stroke-width="0.5" />
<rect x="858.7" y="571" width="18" height="14" fill="#3a3a3a"/>
<ellipse cx="867.7" cy="575" rx="7" ry="3" fill="#2a2a2a"/>
<rect x="863.7" y="544" width="7" height="22" rx="3" fill="#f2f2f2" stroke="#999" stroke-width=".4"/>
<ellipse cx="867.2" cy="544" rx="4" ry="2" fill="none" stroke="#888" stroke-width=".6"/>
<polygon points="586.0,639.6 665.8,644.9 674.6,652.0 685.3,692.7 603.8,687.4" fill="#f7f4f4" stroke="#aaa" stroke-width="0.6" />
<polygon points="600.3,652.0 664.0,655.5 678.2,687.0 610.9,683.9" fill="#f4f0f1" stroke="#999" stroke-width="0.5" />
<polygon points="602.0,654.0 662.0,657.0 675.0,685.0 612.0,682.0" fill="none" stroke="#bbb" stroke-width="0.4" />
<polygon points="462.8,645.0 484.0,643.0 486.0,666.0 464.0,668.0" fill="#b0b0a0" stroke="#666" stroke-width="0.6" />
<rect x="464" y="645" width="20" height="7" fill="#d8d8c8"/>
<polygon points="465.0,668.0 485.0,666.0 487.0,676.0 466.0,678.0" fill="#c8c8b4" stroke="#777" stroke-width="0.5" />
<ellipse cx="473.5" cy="689" rx="17" ry="12" fill="#b8b8a4" stroke="#6e6e60" stroke-width=".6"/>
<ellipse cx="473.5" cy="687" rx="11" ry="7" fill="#d6d6c4" stroke="#888" stroke-width=".5"/>
<path d="M471 690 L466 713" stroke="#888878" stroke-width="5"/><path d="M471 690 L466 713" stroke="#e0e0d0" stroke-width="2.5"/>
<ellipse cx="546" cy="700" rx="18" ry="12" fill="#b0b0a0" stroke="#666" stroke-width=".6"/>
<ellipse cx="549" cy="690" rx="12" ry="9" fill="#2c2c2c" stroke="#111" stroke-width=".5"/>
<ellipse cx="546" cy="703" rx="13" ry="8" fill="#d8d8c8" stroke="#888" stroke-width=".5"/>
<line x1="565" y1="236" x2="587" y2="263" stroke="#22ad5c" stroke-width="1.1"/>
<line x1="570" y1="236" x2="605" y2="263" stroke="#22ad5c" stroke-width="1.1"/>
<line x1="581" y1="236" x2="655.5" y2="270" stroke="#22ad5c" stroke-width="1.1"/>
<line x1="538" y1="312.5" x2="573" y2="315.3" stroke="#22ad5c" stroke-width="1.1"/>
<line x1="668.4" y1="245" x2="709.5" y2="238.4" stroke="#22ad5c" stroke-width="1.1"/>
<line x1="683.6" y1="291" x2="713" y2="279" stroke="#22ad5c" stroke-width="1.1"/>
<line x1="804" y1="281.7" x2="868" y2="276" stroke="#22ad5c" stroke-width="1.1"/>
<line x1="803" y1="236" x2="776.8" y2="259.8" stroke="#22ad5c" stroke-width="1.1"/>
<line x1="854" y1="351" x2="676.5" y2="340.3" stroke="#22ad5c" stroke-width="1.1"/>
<line x1="854" y1="351" x2="790.5" y2="326.7" stroke="#22ad5c" stroke-width="1.1"/>
<line x1="809" y1="371" x2="746.4" y2="372.9" stroke="#22ad5c" stroke-width="1.1"/>
<line x1="798" y1="421" x2="732.7" y2="431.2" stroke="#22ad5c" stroke-width="1.1"/>
<line x1="456" y1="486" x2="544" y2="486.2" stroke="#22ad5c" stroke-width="1.1"/>
<line x1="904" y1="526" x2="844.8" y2="466.8" stroke="#22ad5c" stroke-width="1.1"/>
<line x1="904" y1="526" x2="868.3" y2="574.9" stroke="#22ad5c" stroke-width="1.1"/>
<line x1="429" y1="654" x2="467.2" y2="653.8" stroke="#22ad5c" stroke-width="1.1"/>
<line x1="783" y1="659" x2="750.6" y2="657.9" stroke="#22ad5c" stroke-width="1.1"/>
<line x1="702" y1="691" x2="677.7" y2="682.6" stroke="#22ad5c" stroke-width="1.1"/>
<line x1="580" y1="708" x2="560.3" y2="703.6" stroke="#22ad5c" stroke-width="1.1"/>
<text x="710.5" y="243.4" font-size="11" fill="#111" font-family="Liberation Sans">00053836</text>
<text x="804" y="240.4" font-size="11" fill="#111" font-family="Liberation Sans">00053836</text>
<text x="713.9" y="283.1" font-size="11" fill="#111" font-family="Liberation Sans">00053835</text>
<text x="868.6" y="280.1" font-size="11" fill="#111" font-family="Liberation Sans">00053835</text>
<text x="488.7" y="316.6" font-size="11" fill="#111" font-family="Liberation Sans">00053834</text>
<text x="854.4" y="355.1" font-size="11" fill="#111" font-family="Liberation Sans">00053834</text>
<text x="809.1" y="375.1" font-size="11" fill="#111" font-family="Liberation Sans">00023495</text>
<rect x="797.2" y="413.7" width="51.96" height="14" fill="#d3e3fd"/>
<text x="798.7" y="424.8" font-size="11" fill="#1a2a55" font-family="Liberation Sans">00226869</text>
<text x="389.4" y="490.1" font-size="11" fill="#111" font-family="Liberation Sans">20455203 Q1</text>
<text x="904.7" y="530.2" font-size="11" fill="#111" font-family="Liberation Sans">00053767</text>
<text x="378.9" y="658.2" font-size="11" fill="#111" font-family="Liberation Sans">00036249</text>
<text x="783.2" y="663.0" font-size="11" fill="#111" font-family="Liberation Sans">00104381</text>
<text x="702" y="694.7" font-size="11" fill="#111" font-family="Liberation Sans">00075699</text>
<text x="579.7" y="712.5" font-size="11" fill="#111" font-family="Liberation Sans">00053839 S3</text>
<rect x="330" y="692" width="661" height="21" fill="url(#pgb)"/></svg></div>
<div class="a" style="left:972.8px;top:273.6px;width:34.4px;height:34.4px;border-radius:50%;background:linear-gradient(90deg,#fff 50%,#f1f1f1 50%);box-shadow:0 0 2px rgba(0,0,0,.25)"></div>
<svg class="a" style="left:983px;top:284px" width="17" height="17" viewBox="0 0 17 17"><path d="M1.5 1h14c.3 0 .5.2.5.5V16l-3-3H1.5c-.3 0-.5-.2-.5-.5v-11c0-.3.2-.5.5-.5z" fill="#767676"/><path d="M8.5 3.5v7M5 7h7" stroke="#fff" stroke-width="1.5"/></svg></div>
</div>
<div id="dock" class="a"></div><svg width="0" height="0" style="position:absolute"><defs>
<linearGradient id="gBlue" x1="0" y1="0" x2="0" y2="1"><stop offset="0" stop-color="#1fb8ff"/><stop offset="1" stop-color="#1270e8"/></linearGradient>
<linearGradient id="gGreen" x1="0" y1="0" x2="0" y2="1"><stop offset="0" stop-color="#5ff777"/><stop offset="1" stop-color="#0fbf3a"/></linearGradient>
<linearGradient id="gRed" x1="0" y1="0" x2="0" y2="1"><stop offset="0" stop-color="#fd5d6f"/><stop offset="1" stop-color="#f2263f"/></linearGradient>
<linearGradient id="gOrange" x1="0" y1="0" x2="0" y2="1"><stop offset="0" stop-color="#ffb33b"/><stop offset="1" stop-color="#f8890f"/></linearGradient>
<linearGradient id="gGray" x1="0" y1="0" x2="0" y2="1"><stop offset="0" stop-color="#b9b9bd"/><stop offset="1" stop-color="#78787c"/></linearGradient>
</defs></svg>
<svg class="a" style="left:42.5px;top:742px" width="32" height="32" viewBox="0 0 32 32"><rect x=".5" y=".5" width="31" height="31" rx="7" fill="#e8eef5"/><path d="M7.5.5H17c-2 5-3.5 10-3.5 16.5H17v14.5H7.5a7 7 0 0 1-7-7v-17a7 7 0 0 1 7-7z" fill="#1a8cf0"/><circle cx="10" cy="11" r="1.3" fill="#111"/><circle cx="22" cy="11" r="1.3" fill="#111"/><path d="M7 21c5 4 13 4 18 0" fill="none" stroke="#111" stroke-width="1.3"/></svg>
<svg class="a" style="left:85px;top:742px" width="32" height="32" viewBox="0 0 32 32"><rect x=".5" y=".5" width="31" height="31" rx="7" fill="#c9c9ce"/><rect x="6.0" y="6.0" width="6" height="6" rx="1.3" fill="#34c759"/><rect x="13.5" y="6.0" width="6" height="6" rx="1.3" fill="#ffcc00"/><rect x="21.0" y="6.0" width="6" height="6" rx="1.3" fill="#ff9500"/><rect x="6.0" y="13.5" width="6" height="6" rx="1.3" fill="#ff3b30"/><rect x="13.5" y="13.5" width="6" height="6" rx="1.3" fill="#8e8e93"/><rect x="21.0" y="13.5" width="6" height="6" rx="1.3" fill="#ff2d55"/><rect x="6.0" y="21.0" width="6" height="6" rx="1.3" fill="#af52de"/><rect x="13.5" y="21.0" width="6" height="6" rx="1.3" fill="#007aff"/><rect x="21.0" y="21.0" width="6" height="6" rx="1.3" fill="#5ac8fa"/></svg>
<svg class="a" style="left:127.5px;top:742px" width="32" height="32" viewBox="0 0 32 32"><rect x=".5" y=".5" width="31" height="31" rx="7" fill="#f4f4f4"/><circle cx="16" cy="16" r="12" fill="url(#gBlue)"/><circle cx="16" cy="16" r="11" fill="none" stroke="#fff" stroke-width=".5" stroke-dasharray="1 1.5"/><path d="M23 9l-8.5 5.5L9 23l8.5-5.5z" fill="#fff"/><path d="M23 9l-8.5 5.5 3 3z" fill="#ff3b30"/></svg>
<svg class="a" style="left:169.7px;top:742px" width="32" height="32" viewBox="0 0 32 32"><rect x=".5" y=".5" width="31" height="31" rx="7" fill="url(#gGreen)"/><ellipse cx="16" cy="15" rx="10.5" ry="8.5" fill="#fff"/><path d="M8 20l-1.5 4.5 5-2.5z" fill="#fff"/></svg>
<svg class="a" style="left:212px;top:742px" width="32" height="32" viewBox="0 0 32 32"><rect x=".5" y=".5" width="31" height="31" rx="7" fill="url(#gBlue)"/><rect x="6" y="9" width="20" height="14" rx="1.5" fill="#f4f8ff"/><path d="M6.5 9.5L16 17l9.5-7.5" fill="none" stroke="#8fb3dd" stroke-width="1"/></svg>
<svg class="a" style="left:254.5px;top:742px" width="32" height="32" viewBox="0 0 32 32"><rect x=".5" y=".5" width="31" height="31" rx="7" fill="#e9f2e6"/><path d="M.5 14L12 .5h6L.5 22z" fill="#8ad08a"/><path d="M18 31.5l13.5-13V10L10 31.5z" fill="#f5d86a"/><path d="M14 .5h4v31h-4z" fill="#5aa8f0"/><path d="M22 .5h9.5v8z" fill="#b6e0b6"/><path d="M.5 24l6 7.5H.5z" fill="#f27ab0"/><circle cx="16" cy="18" r="6" fill="#fff"/><circle cx="16" cy="18" r="5" fill="#1a7cf0"/><path d="M16 14.5l2.5 6-2.5-1.2-2.5 1.2z" fill="#fff"/></svg>
<svg class="a" style="left:296.8px;top:742px" width="32" height="32" viewBox="0 0 32 32"><rect x=".5" y=".5" width="31" height="31" rx="7" fill="#fafafa"/><ellipse cx="16" cy="10" rx="3.3" ry="6" fill="#f9a51b" opacity=".85" transform="rotate(0 16 16)"/><ellipse cx="16" cy="10" rx="3.3" ry="6" fill="#f6d10e" opacity=".85" transform="rotate(45 16 16)"/><ellipse cx="16" cy="10" rx="3.3" ry="6" fill="#8cc63f" opacity=".85" transform="rotate(90 16 16)"/><ellipse cx="16" cy="10" rx="3.3" ry="6" fill="#3db28a" opacity=".85" transform="rotate(135 16 16)"/><ellipse cx="16" cy="10" rx="3.3" ry="6" fill="#2b9be3" opacity=".85" transform="rotate(180 16 16)"/><ellipse cx="16" cy="10" rx="3.3" ry="6" fill="#7d62d9" opacity=".85" transform="rotate(225 16 16)"/><ellipse cx="16" cy="10" rx="3.3" ry="6" fill="#d6529d" opacity=".85" transform="rotate(270 16 16)"/><ellipse cx="16" cy="10" rx="3.3" ry="6" fill="#ef4a3c" opacity=".85" transform="rotate(315 16 16)"/></svg>
<svg class="a" style="left:339.2px;top:742px" width="32" height="32" viewBox="0 0 32 32"><rect x=".5" y=".5" width="31" height="31" rx="7" fill="url(#gGreen)"/><rect x="6" y="11" width="14" height="10" rx="2.5" fill="#fff"/><path d="M21 15l5.5-4v10L21 17z" fill="#fff"/></svg>
<svg class="a" style="left:381.5px;top:742px" width="32" height="32" viewBox="0 0 32 32"><rect x=".5" y=".5" width="31" height="31" rx="7" fill="#fdfdfd"/><path d="M.5 7.5a7 7 0 0 1 7-7h17a7 7 0 0 1 7 7v1.5H.5z" fill="#f0443a"/><text x="16" y="7.5" font-size="5.5" fill="#fff" text-anchor="middle" font-family="Liberation Sans" font-weight="bold">JAN</text><text x="16" y="26.5" font-size="16" fill="#222" text-anchor="middle" font-family="Liberation Sans">18</text></svg>
<svg class="a" style="left:424px;top:742px" width="32" height="32" viewBox="0 0 32 32"><rect x=".5" y=".5" width="31" height="31" rx="7" fill="#b08a5a"/><rect x="27" y="7" width="4" height="4" fill="#e9a23b"/><rect x="27" y="12" width="4" height="4" fill="#55a3e0"/><circle cx="15" cy="16" r="10" fill="#a67e4f" stroke="#c9a678" stroke-width="1"/><circle cx="15" cy="13" r="3.5" fill="#c9a678"/><path d="M8.5 22c2-4 11-4 13 0" fill="#c9a678"/></svg>
<svg class="a" style="left:466.3px;top:742px" width="32" height="32" viewBox="0 0 32 32"><rect x=".5" y=".5" width="31" height="31" rx="7" fill="#fdfdfd"/><circle cx="8" cy="9" r="2" fill="#007aff"/><circle cx="8" cy="16" r="2" fill="#ff3b30"/><circle cx="8" cy="23" r="2" fill="#ff9500"/><path d="M12 9h14M12 16h14M12 23h14" stroke="#ddd" stroke-width="1"/></svg>
<svg class="a" style="left:508.6px;top:742px" width="32" height="32" viewBox="0 0 32 32"><rect x=".5" y=".5" width="31" height="31" rx="7" fill="#fbfbf8"/><path d="M.5 7.5a7 7 0 0 1 7-7h17a7 7 0 0 1 7 7v3H.5z" fill="#fdd33a"/><path d="M3 16h26M3 21h26M3 26h26" stroke="#e2e2dc" stroke-width=".8"/></svg>
<svg class="a" style="left:551px;top:742px" width="32" height="32" viewBox="0 0 32 32"><rect x=".5" y=".5" width="31" height="31" rx="7" fill="#fdfdfd"/><rect x="9" y="6" width="16" height="16" rx="2" fill="#58b6f5"/><path d="M5 24c3-8 8-10 8-5s-3 6 1 4 6-9 8-6-2 6 3 4" fill="none" stroke="#222" stroke-width="2.2"/><path d="M5 24c3-8 8-10 8-5" fill="none" stroke="#f26a3a" stroke-width="2.2"/></svg>
<svg class="a" style="left:593.3px;top:742px" width="32" height="32" viewBox="0 0 32 32"><rect x=".5" y=".5" width="31" height="31" rx="7" fill="#1b1b1d"/><path d="M8.5 12c.2-1 1-1.6 1.6-1.6-.1.9-.7 1.6-1.6 1.6zM12 16c0-1.3 1-2 1.1-2.1-.6-.9-1.6-1-1.9-1-.8-.1-1.6.5-2 .5s-1-.5-1.7-.5C6.4 13 5.5 14 5.5 15.7c0 2.2 1.6 4.8 2.6 4.8.6 0 .9-.4 1.6-.4s.9.4 1.6.4c1 0 1.9-1.8 2.1-2.5-1-.4-1.4-1.2-1.4-2z" fill="#fff"/><text x="15" y="20" font-size="11" fill="#fff" font-family="Liberation Sans" font-weight="bold">tv</text></svg>
<svg class="a" style="left:635.6px;top:742px" width="32" height="32" viewBox="0 0 32 32"><rect x=".5" y=".5" width="31" height="31" rx="7" fill="url(#gRed)"/><path d="M12 9l10-2v13" fill="none" stroke="#fff" stroke-width="2.2"/><path d="M12 9v13" stroke="#fff" stroke-width="2.2"/><ellipse cx="9.5" cy="22.5" rx="3.2" ry="2.6" fill="#fff"/><ellipse cx="19.5" cy="20.5" rx="3.2" ry="2.6" fill="#fff"/></svg>
<svg class="a" style="left:678px;top:742px" width="32" height="32" viewBox="0 0 32 32"><rect x=".5" y=".5" width="31" height="31" rx="7" fill="#fdfdfd"/><path d="M7 7l9 0 9 9v9h-9l-9-9z" fill="#fa3e57"/><path d="M7 10v15h6.5zM25 22V7h-6.5z" fill="#fa3e57"/><path d="M8.5 7.5l16 16.5" stroke="#fff" stroke-width="2.2"/></svg>
<svg class="a" style="left:720.3px;top:742px" width="32" height="32" viewBox="0 0 32 32"><rect x=".5" y=".5" width="31" height="31" rx="7" fill="url(#gBlue)"/><rect x="7" y="8" width="18" height="11" rx="1" fill="#fff"/><circle cx="16" cy="13.5" r="3.2" fill="#f7b52c"/><path d="M16 13.5V10.3A3.2 3.2 0 0 1 19.2 13.5z" fill="#e94e3c"/><path d="M16 19v8M12 27h8" stroke="#fff" stroke-width="1.5"/></svg>
<svg class="a" style="left:762.6px;top:742px" width="32" height="32" viewBox="0 0 32 32"><rect x=".5" y=".5" width="31" height="31" rx="7" fill="url(#gGreen)"/><rect x="7" y="18" width="3" height="8" fill="#fff"/><rect x="12" y="13" width="3" height="13" fill="#fff"/><rect x="17" y="9" width="3" height="17" fill="#fff"/><rect x="22" y="5" width="3" height="21" fill="#fff"/></svg>
<svg class="a" style="left:805px;top:742px" width="32" height="32" viewBox="0 0 32 32"><rect x=".5" y=".5" width="31" height="31" rx="7" fill="url(#gOrange)"/><path d="M8 24L22 7l2.5 2-14 17z" fill="#fff"/><path d="M7 26h18" stroke="#fff" stroke-width="1" opacity=".6"/></svg>
<svg class="a" style="left:847.3px;top:742px" width="32" height="32" viewBox="0 0 32 32"><rect x=".5" y=".5" width="31" height="31" rx="7" fill="url(#gBlue)"/><path d="M12.5 22L18.5 8.5M19.5 22L13.5 8.5M7 19h18M20.5 22.5l2 3.5" fill="none" stroke="#fff" stroke-width="2" stroke-linecap="round"/></svg>
<svg class="a" style="left:889.6px;top:742px" width="32" height="32" viewBox="0 0 32 32"><rect x=".5" y=".5" width="31" height="31" rx="7" fill="url(#gGray)"/><circle cx="16" cy="16" r="11" fill="#5e5e62" stroke="#4a4a4e" stroke-width="1.5"/><circle cx="16" cy="16" r="8" fill="#a6a6aa"/><circle cx="16" cy="16" r="3.5" fill="#5e5e62"/><path d="M16 8v4.5M9 19.5l3.9-2M23 19.5l-3.9-2" stroke="#5e5e62" stroke-width="2"/></svg>
<div class="a" style="left:936.5px;top:742px;width:1px;height:33px;background:rgba(40,40,30,.55)"></div>
<svg class="a" style="left:951px;top:742px" width="32" height="32" viewBox="0 0 32 32"><rect x=".5" y=".5" width="31" height="31" rx="7" fill="#fafafa"/><circle cx="16" cy="16" r="11.5" fill="#ea4335"/><path d="M16 16L6 21.75A11.5 11.5 0 0 0 16 27.5l10-5.75z" fill="#34a853"/><path d="M16 4.5a11.5 11.5 0 0 1 10 17.25L16 16V4.5z" fill="#fbbc04" opacity="0"/><path d="M16 16h11.5A11.5 11.5 0 0 1 16 27.5z" fill="#fbbc04"/><path d="M16 16L4.5 16A11.5 11.5 0 0 0 16 27.5z" fill="#34a853"/><circle cx="16" cy="16" r="5.5" fill="#fff"/><circle cx="16" cy="16" r="4.3" fill="#1a73e8"/></svg>
<svg class="a" style="left:993.5px;top:742px" width="32" height="32" viewBox="0 0 32 32"><rect x=".5" y=".5" width="31" height="31" rx="7" fill="#a8423f"/><rect x="1" y="1" width="30" height="30" rx="6.5" fill="#b44a46"/><text x="16" y="21" font-size="13" fill="#fff" text-anchor="middle" font-family="Liberation Serif">Aa</text><rect x="6" y="30" width="4" height="2" fill="#e33"/></svg>
<svg class="a" style="left:1036px;top:742px" width="32" height="32" viewBox="0 0 32 32"><rect x=".5" y=".5" width="31" height="31" rx="7" fill="#f4f4f4"/><rect x="4" y="4" width="24" height="19" fill="#7fb2e8"/><path d="M4 17c6-3 12 2 24-3v9H4z" fill="#e6eef5"/><rect x="13" y="20" width="14" height="11" rx="1.5" fill="#222"/><rect x="14.5" y="18" width="11" height="3" rx="1" fill="#ddd"/></svg>
<div class="a" style="left:1083px;top:742px;width:1px;height:33px;background:rgba(40,40,30,.55)"></div>
<svg class="a" style="left:1094.5px;top:742px" width="32" height="32" viewBox="0 0 32 32"><path d="M5 3h15l7 7v19H5z" fill="#e6e6e6"/><path d="M3 5h15l7 7v19H3z" fill="#f6f6f6"/><path d="M18 5v7h7" fill="#ddd"/><text x="14" y="27" font-size="4" fill="#666" text-anchor="middle" font-family="Liberation Sans">csv</text></svg>
<svg class="a" style="left:1140px;top:742px" width="32" height="32" viewBox="0 0 32 32"><path d="M5 6h22l-2.5 24c-.1 1-1 1.5-2 1.5H9.5c-1 0-1.9-.5-2-1.5z" fill="#e9eaea" opacity=".9"/><ellipse cx="16" cy="6" rx="11" ry="2.3" fill="#cfd2d2"/><path d="M9 9l1.5 20M13 9l.5 20M19 9l-.5 20M23 9l-1.5 20" stroke="#bfc3c3" stroke-width=".8"/><path d="M9 5l3-2 3 2 3-1 4 1 3 1" fill="none" stroke="#8aa" stroke-width="1"/></svg>
<div class="a" style="left:56.4px;top:781px;width:3.2px;height:3.2px;border-radius:50%;background:#111"></div>
<div class="a" style="left:225.4px;top:781px;width:3.2px;height:3.2px;border-radius:50%;background:#111"></div>
<div class="a" style="left:521.9px;top:781px;width:3.2px;height:3.2px;border-radius:50%;background:#111"></div>
<div class="a" style="left:692.4px;top:781px;width:3.2px;height:3.2px;border-radius:50%;background:#111"></div>
<div class="a" style="left:964.4px;top:781px;width:3.2px;height:3.2px;border-radius:50%;background:#111"></div></body></html>
